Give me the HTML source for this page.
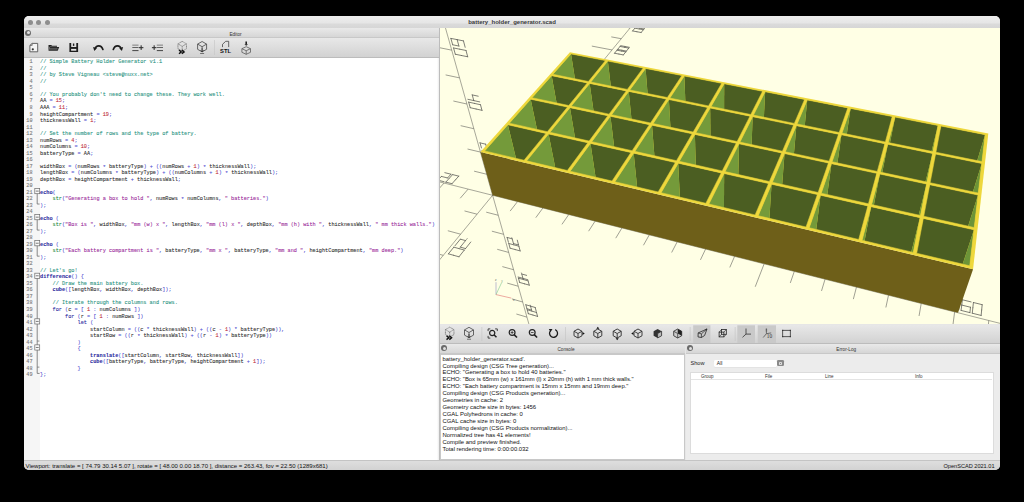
<!DOCTYPE html>
<html><head><meta charset="utf-8"><style>
*{margin:0;padding:0;box-sizing:border-box}
html,body{width:1024px;height:502px;overflow:hidden;background:#000}
body{position:relative;font-family:"Liberation Sans",sans-serif}
.a{position:absolute}
i,b{font-style:normal}
#win{left:24px;top:16px;width:976px;height:454px;border-radius:5px;background:#e6e6e6;overflow:hidden}
#title{left:0;top:0;width:976px;height:12.5px;background:linear-gradient(#eeeeee 0%,#e6e6e6 55%,#dadada 70%,#d6d6d6 100%);border-bottom:0.6px solid #c8c8c8}
.tl{width:5px;height:5px;border-radius:50%;background:#8e8e8e;top:3.8px}
#ttext{left:0;top:0;width:976px;text-align:center;font-weight:bold;font-size:6px;line-height:12px;color:#3a3a3a}
.dockh{height:9.5px;background:linear-gradient(#e9e9e9,#d6d6d6);border-bottom:1px solid #c8c8c8}
.dockt{font-size:4.7px;line-height:9.5px;color:#333;text-align:center;width:100%;top:1.2px;left:0;padding-left:7px}
.closeb{width:6px;height:6px;border-radius:50%;background:#6a6a6a;top:1.8px}
.closeb:after{content:"";position:absolute;left:1.5px;top:1.5px;width:3px;height:3px;border-radius:50%;background:#e0e0e0}
.tb{background:linear-gradient(#e8e8e8,#d2d2d2);border-bottom:1px solid #bcbcbc}
#code{left:16px;top:43.4px;font-family:"Liberation Mono",monospace;font-size:5.22px;line-height:6.515px;white-space:pre;color:#303030;-webkit-text-stroke:0.08px currentColor}
#nums{left:0;top:43.4px;width:8.5px;text-align:right;font-family:"Liberation Mono",monospace;font-size:5.2px;line-height:6.515px;white-space:pre;color:#7a7a7a;-webkit-text-stroke:0.1px currentColor}
#console{left:1.5px;top:0.6px;font-size:5.9px;line-height:6.94px;white-space:pre;color:#111}
#status{left:0;top:443.5px;width:976px;height:10.5px;background:linear-gradient(#dedede,#d2d2d2);border-top:0.6px solid #c4c4c4;font-size:6.03px;line-height:11px;color:#111}
</style></head><body>
<div id="win" class="a">
 <div id="title" class="a">
  <div class="a tl" style="left:3.9px"></div><div class="a tl" style="left:12.3px"></div><div class="a tl" style="left:21.3px"></div>
  <div id="ttext" class="a">battery_holder_generator.scad</div>
 </div>
 <!-- left panel -->
 <div class="a" style="left:0;top:12px;width:416px;height:432px;background:#fff">
  <div class="a dockh" style="left:0;top:0;width:416px"><div class="a closeb" style="left:1px"></div><div class="a dockt" style="top:2.1px">Editor</div></div>
  <div class="a tb" style="left:0;top:9.5px;width:416px;height:20px"></div>
  <div class="a" style="left:0;top:29.5px;width:16px;height:402.5px;background:#f6f6f6"></div>
 </div>
 <div id="nums" class="a">1
2
3
4
5
6
7
8
9
10
11
12
13
14
15
16
17
18
19
20
21
22
23
24
25
26
27
28
29
30
31
32
33
34
35
36
37
38
39
40
41
42
43
44
45
46
47
48
49</div>
 <div id="code" class="a"><i style="color:#2a9482">// Simple Battery Holder Generator v1.1</i>
<i style="color:#2a9482">//</i>
<i style="color:#2a9482">// by Steve Vigneau &lt;steve@nuxx.net&gt;</i>
<i style="color:#2a9482">//</i>

<i style="color:#2a9482">// You probably don&#x27;t need to change these. They work well.</i>
AA <i style="color:#4a4ad0">=</i> <i style="color:#c0303a">15</i><i style="color:#4a4ad0">;</i>
AAA <i style="color:#4a4ad0">=</i> <i style="color:#c0303a">11</i><i style="color:#4a4ad0">;</i>
heightCompartment <i style="color:#4a4ad0">=</i> <i style="color:#c0303a">19</i><i style="color:#4a4ad0">;</i>
thicknessWall <i style="color:#4a4ad0">=</i> <i style="color:#c0303a">1</i><i style="color:#4a4ad0">;</i>

<i style="color:#2a9482">// Set the number of rows and the type of battery.</i>
numRows <i style="color:#4a4ad0">=</i> <i style="color:#c0303a">4</i><i style="color:#4a4ad0">;</i>
numColumns <i style="color:#4a4ad0">=</i> <i style="color:#c0303a">10</i><i style="color:#4a4ad0">;</i>
batteryType <i style="color:#4a4ad0">=</i> AA<i style="color:#4a4ad0">;</i>

widthBox <i style="color:#4a4ad0">=</i> <i style="color:#4a4ad0">(</i>numRows <i style="color:#4a4ad0;position:relative;top:0.9px">*</i> batteryType<i style="color:#4a4ad0">)</i> <i style="color:#4a4ad0">+</i> <i style="color:#4a4ad0">(</i><i style="color:#4a4ad0">(</i>numRows <i style="color:#4a4ad0">+</i> <i style="color:#c0303a">1</i><i style="color:#4a4ad0">)</i> <i style="color:#4a4ad0;position:relative;top:0.9px">*</i> thicknessWall<i style="color:#4a4ad0">)</i><i style="color:#4a4ad0">;</i>
lengthBox <i style="color:#4a4ad0">=</i> <i style="color:#4a4ad0">(</i>numColumns <i style="color:#4a4ad0;position:relative;top:0.9px">*</i> batteryType<i style="color:#4a4ad0">)</i> <i style="color:#4a4ad0">+</i> <i style="color:#4a4ad0">(</i><i style="color:#4a4ad0">(</i>numColumns <i style="color:#4a4ad0">+</i> <i style="color:#c0303a">1</i><i style="color:#4a4ad0">)</i> <i style="color:#4a4ad0;position:relative;top:0.9px">*</i> thicknessWall<i style="color:#4a4ad0">)</i><i style="color:#4a4ad0">;</i>
depthBox <i style="color:#4a4ad0">=</i> heightCompartment <i style="color:#4a4ad0">+</i> thicknessWall<i style="color:#4a4ad0">;</i>

<b style="color:#2c2ca0">echo</b><i style="color:#4a4ad0">(</i>
    <i style="color:#1f8a3a">str</i><i style="color:#4a4ad0">(</i><i style="color:#9a2a9a">&quot;Generating a box to hold &quot;</i><i style="color:#4a4ad0">,</i> numRows <i style="color:#4a4ad0;position:relative;top:0.9px">*</i> numColumns<i style="color:#4a4ad0">,</i> <i style="color:#9a2a9a">&quot; batteries.&quot;</i><i style="color:#4a4ad0">)</i>
<i style="color:#4a4ad0">)</i><i style="color:#4a4ad0">;</i>

<b style="color:#2c2ca0">echo</b> <i style="color:#4a4ad0">(</i>
    <i style="color:#1f8a3a">str</i><i style="color:#4a4ad0">(</i><i style="color:#9a2a9a">&quot;Box is &quot;</i><i style="color:#4a4ad0">,</i> widthBox<i style="color:#4a4ad0">,</i> <i style="color:#9a2a9a">&quot;mm (w) x &quot;</i><i style="color:#4a4ad0">,</i> lengthBox<i style="color:#4a4ad0">,</i> <i style="color:#9a2a9a">&quot;mm (l) x &quot;</i><i style="color:#4a4ad0">,</i> depthBox<i style="color:#4a4ad0">,</i> <i style="color:#9a2a9a">&quot;mm (h) with &quot;</i><i style="color:#4a4ad0">,</i> thicknessWall<i style="color:#4a4ad0">,</i> <i style="color:#9a2a9a">&quot; mm thick walls.&quot;</i><i style="color:#4a4ad0">)</i>
<i style="color:#4a4ad0">)</i><i style="color:#4a4ad0">;</i>

<b style="color:#2c2ca0">echo</b> <i style="color:#4a4ad0">(</i>
    <i style="color:#1f8a3a">str</i><i style="color:#4a4ad0">(</i><i style="color:#9a2a9a">&quot;Each battery compartment is &quot;</i><i style="color:#4a4ad0">,</i> batteryType<i style="color:#4a4ad0">,</i> <i style="color:#9a2a9a">&quot;mm x &quot;</i><i style="color:#4a4ad0">,</i> batteryType<i style="color:#4a4ad0">,</i> <i style="color:#9a2a9a">&quot;mm and &quot;</i><i style="color:#4a4ad0">,</i> heightCompartment<i style="color:#4a4ad0">,</i> <i style="color:#9a2a9a">&quot;mm deep.&quot;</i><i style="color:#4a4ad0">)</i>
<i style="color:#4a4ad0">)</i><i style="color:#4a4ad0">;</i>

<i style="color:#2a9482">// Let&#x27;s go!</i>
<b style="color:#2c2ca0">difference</b><i style="color:#4a4ad0">(</i><i style="color:#4a4ad0">)</i> <i style="color:#4a4ad0">{</i>
    <i style="color:#2a9482">// Draw the main battery box.</i>
    <b style="color:#2c2ca0">cube</b><i style="color:#4a4ad0">(</i><i style="color:#4a4ad0">[</i>lengthBox<i style="color:#4a4ad0">,</i> widthBox<i style="color:#4a4ad0">,</i> depthBox<i style="color:#4a4ad0">]</i><i style="color:#4a4ad0">)</i><i style="color:#4a4ad0">;</i>

    <i style="color:#2a9482">// Iterate through the columns and rows.</i>
    <i style="color:#2c2ca0">for</i> <i style="color:#4a4ad0">(</i>c <i style="color:#4a4ad0">=</i> <i style="color:#4a4ad0">[</i> <i style="color:#c0303a">1</i> <i style="color:#4a4ad0">:</i> numColumns <i style="color:#4a4ad0">]</i><i style="color:#4a4ad0">)</i>
        <i style="color:#2c2ca0">for</i> <i style="color:#4a4ad0">(</i>r <i style="color:#4a4ad0">=</i> <i style="color:#4a4ad0">[</i> <i style="color:#c0303a">1</i> <i style="color:#4a4ad0">:</i> numRows <i style="color:#4a4ad0">]</i><i style="color:#4a4ad0">)</i>
            <i style="color:#2c2ca0">let</i> <i style="color:#4a4ad0">(</i>
                startColumn <i style="color:#4a4ad0">=</i> <i style="color:#4a4ad0">(</i><i style="color:#4a4ad0">(</i>c <i style="color:#4a4ad0;position:relative;top:0.9px">*</i> thicknessWall<i style="color:#4a4ad0">)</i> <i style="color:#4a4ad0">+</i> <i style="color:#4a4ad0">(</i><i style="color:#4a4ad0">(</i>c <i style="color:#4a4ad0">-</i> <i style="color:#c0303a">1</i><i style="color:#4a4ad0">)</i> <i style="color:#4a4ad0;position:relative;top:0.9px">*</i> batteryType<i style="color:#4a4ad0">)</i><i style="color:#4a4ad0">)</i><i style="color:#4a4ad0">,</i>
                startRow <i style="color:#4a4ad0">=</i> <i style="color:#4a4ad0">(</i><i style="color:#4a4ad0">(</i>r <i style="color:#4a4ad0;position:relative;top:0.9px">*</i> thicknessWall<i style="color:#4a4ad0">)</i> <i style="color:#4a4ad0">+</i> <i style="color:#4a4ad0">(</i><i style="color:#4a4ad0">(</i>r <i style="color:#4a4ad0">-</i> <i style="color:#c0303a">1</i><i style="color:#4a4ad0">)</i> <i style="color:#4a4ad0;position:relative;top:0.9px">*</i> batteryType<i style="color:#4a4ad0">)</i><i style="color:#4a4ad0">)</i>
            <i style="color:#4a4ad0">)</i>
            <i style="color:#4a4ad0">{</i>
                <b style="color:#2c2ca0">translate</b><i style="color:#4a4ad0">(</i><i style="color:#4a4ad0">[</i>startColumn<i style="color:#4a4ad0">,</i> startRow<i style="color:#4a4ad0">,</i> thicknessWall<i style="color:#4a4ad0">]</i><i style="color:#4a4ad0">)</i>
                <b style="color:#2c2ca0">cube</b><i style="color:#4a4ad0">(</i><i style="color:#4a4ad0">[</i>batteryType<i style="color:#4a4ad0">,</i> batteryType<i style="color:#4a4ad0">,</i> heightCompartment <i style="color:#4a4ad0">+</i> <i style="color:#c0303a">1</i><i style="color:#4a4ad0">]</i><i style="color:#4a4ad0">)</i><i style="color:#4a4ad0">;</i>
            <i style="color:#4a4ad0">}</i>
<i style="color:#4a4ad0">}</i><i style="color:#4a4ad0">;</i></div>
 <!-- 3d view -->
 <div class="a" style="left:416px;top:12px;width:560px;height:296px;background:#ffffe5;overflow:hidden"><svg width="560" height="296" viewBox="0 0 560 296" style="position:absolute;left:0;top:0"><defs><clipPath id="c1"><polygon points="44.65,122.88 84.06,132.22 105.99,105.39 67.88,96.80" fill="#000"/></clipPath><clipPath id="c2"><polygon points="69.36,95.14 107.39,103.68 127.48,79.10 90.67,71.21" fill="#000"/></clipPath><clipPath id="c3"><polygon points="92.03,69.69 128.77,77.53 147.25,54.93 111.64,47.66" fill="#000"/></clipPath><clipPath id="c4"><polygon points="112.90,46.25 148.43,53.48 165.49,32.62 131.02,25.90" fill="#000"/></clipPath><clipPath id="c5"><polygon points="86.73,132.85 127.37,142.47 147.83,114.82 108.57,105.97" fill="#000"/></clipPath><clipPath id="c6"><polygon points="109.96,104.26 149.13,113.06 167.85,87.75 129.97,79.64" fill="#000"/></clipPath><clipPath id="c7"><polygon points="131.25,78.06 169.05,86.14 186.24,62.89 149.66,55.42" fill="#000"/></clipPath><clipPath id="c8"><polygon points="150.83,53.97 187.34,61.40 203.19,39.98 167.81,33.08" fill="#000"/></clipPath><clipPath id="c9"><polygon points="130.12,143.13 172.06,153.06 190.94,124.53 150.48,115.42" fill="#000"/></clipPath><clipPath id="c10"><polygon points="151.78,113.65 192.14,122.72 209.40,96.65 170.41,88.30" fill="#000"/></clipPath><clipPath id="c11"><polygon points="171.60,86.68 210.50,94.99 226.33,71.07 188.72,63.39" fill="#000"/></clipPath><clipPath id="c12"><polygon points="189.81,61.91 227.34,69.55 241.91,47.53 205.58,40.44" fill="#000"/></clipPath><clipPath id="c13"><polygon points="174.90,153.73 218.19,163.98 235.39,134.55 193.68,125.15" fill="#000"/></clipPath><clipPath id="c14"><polygon points="194.87,123.33 236.48,132.68 252.17,105.82 212.03,97.22" fill="#000"/></clipPath><clipPath id="c15"><polygon points="213.13,95.55 253.17,104.10 267.55,79.49 228.87,71.59" fill="#000"/></clipPath><clipPath id="c16"><polygon points="229.88,70.06 268.47,77.92 281.69,55.29 244.37,48.01" fill="#000"/></clipPath><clipPath id="c17"><polygon points="221.12,164.68 265.84,175.27 281.23,144.88 238.21,135.19" fill="#000"/></clipPath><clipPath id="c18"><polygon points="239.30,133.31 282.21,142.95 296.23,115.26 254.89,106.40" fill="#000"/></clipPath><clipPath id="c19"><polygon points="255.88,104.68 297.13,113.49 309.96,88.15 270.17,80.03" fill="#000"/></clipPath><clipPath id="c20"><polygon points="271.08,78.45 310.78,86.53 322.56,63.26 284.21,55.78" fill="#000"/></clipPath><clipPath id="c21"><polygon points="268.88,175.99 315.09,186.93 328.55,155.54 284.15,145.54" fill="#000"/></clipPath><clipPath id="c22"><polygon points="285.12,143.60 329.40,153.55 341.64,124.98 299.03,115.86" fill="#000"/></clipPath><clipPath id="c23"><polygon points="299.92,114.09 342.42,123.17 353.61,97.06 312.65,88.70" fill="#000"/></clipPath><clipPath id="c24"><polygon points="313.46,87.08 354.32,95.40 364.58,71.45 325.16,63.76" fill="#000"/></clipPath><clipPath id="c25"><polygon points="318.23,187.68 366.02,199.00 377.40,166.55 331.55,156.22" fill="#000"/></clipPath><clipPath id="c26"><polygon points="332.40,154.22 378.12,164.49 388.46,135.01 344.53,125.60" fill="#000"/></clipPath><clipPath id="c27"><polygon points="345.30,123.78 389.12,133.14 398.55,106.24 356.38,97.63" fill="#000"/></clipPath><clipPath id="c28"><polygon points="357.09,95.96 399.15,104.53 407.80,79.88 367.25,71.97" fill="#000"/></clipPath><clipPath id="c29"><polygon points="369.26,199.76 418.70,211.47 427.86,177.92 380.50,167.25" fill="#000"/></clipPath><clipPath id="c30"><polygon points="381.22,165.19 428.44,175.79 436.75,145.36 391.43,135.65" fill="#000"/></clipPath><clipPath id="c31"><polygon points="392.08,133.77 437.28,143.43 444.85,115.69 401.40,106.82" fill="#000"/></clipPath><clipPath id="c32"><polygon points="402.00,105.11 445.33,113.93 452.25,88.55 410.54,80.42" fill="#000"/></clipPath><clipPath id="c33"><polygon points="422.06,212.27 473.25,224.39 480.02,189.68 431.07,178.65" fill="#000"/></clipPath><clipPath id="c34"><polygon points="431.64,176.51 480.45,187.48 486.58,156.04 439.82,146.02" fill="#000"/></clipPath><clipPath id="c35"><polygon points="440.34,144.08 486.97,154.04 492.56,125.44 447.79,116.29" fill="#000"/></clipPath><clipPath id="c36"><polygon points="448.26,114.52 492.91,123.61 498.01,97.48 455.08,89.10" fill="#000"/></clipPath><clipPath id="c37"><polygon points="476.72,225.21 529.74,237.77 533.96,201.83 483.34,190.42" fill="#000"/></clipPath><clipPath id="c38"><polygon points="483.76,188.22 534.23,199.56 538.04,167.06 489.75,156.72" fill="#000"/></clipPath><clipPath id="c39"><polygon points="490.13,154.71 538.28,165.00 541.75,135.48 495.59,126.05" fill="#000"/></clipPath><clipPath id="c40"><polygon points="495.93,124.23 541.97,133.60 545.13,106.67 500.92,98.04" fill="#000"/></clipPath></defs><polyline points="-214.74,99.80 1069.44,423.94" fill="none" stroke="#60605a" stroke-width="0.55"/><polyline points="-153.88,418.61 304.58,-139.39" fill="none" stroke="#60605a" stroke-width="0.55"/><polyline points="115.35,389.95 -87.35,-329.51" fill="none" stroke="#60605a" stroke-width="0.55"/><polyline points="94.92,317.45 84.75,314.37" fill="none" stroke="#60605a" stroke-width="0.6"/><polyline points="91.02,303.58 80.65,300.49" fill="none" stroke="#60605a" stroke-width="0.6"/><polyline points="86.94,289.12 76.37,286.02" fill="none" stroke="#60605a" stroke-width="0.6"/><polyline points="82.69,274.01 71.89,270.90" fill="none" stroke="#60605a" stroke-width="0.6"/><polyline points="78.24,258.23 67.22,255.11" fill="none" stroke="#60605a" stroke-width="0.6"/><polyline points="-15.16,249.76 -28.57,245.88" fill="none" stroke="#60605a" stroke-width="0.6"/><polyline points="73.59,241.72 62.34,238.60" fill="none" stroke="#60605a" stroke-width="0.6"/><polyline points="-19.52,149.07 -27.93,157.92" fill="none" stroke="#60605a" stroke-width="0.6"/><polyline points="3.26,227.35 -9.86,223.68" fill="none" stroke="#60605a" stroke-width="0.6"/><polyline points="68.71,224.43 57.22,221.30" fill="none" stroke="#60605a" stroke-width="0.6"/><polyline points="4.10,155.03 -4.08,164.04" fill="none" stroke="#60605a" stroke-width="0.6"/><polyline points="20.64,206.19 7.81,202.73" fill="none" stroke="#60605a" stroke-width="0.6"/><polyline points="63.61,206.30 51.86,203.18" fill="none" stroke="#60605a" stroke-width="0.6"/><polyline points="28.14,161.10 20.21,170.27" fill="none" stroke="#60605a" stroke-width="0.6"/><polyline points="37.07,186.20 24.51,182.93" fill="none" stroke="#60605a" stroke-width="0.6"/><polyline points="58.25,187.27 46.23,184.16" fill="none" stroke="#60605a" stroke-width="0.6"/><polyline points="77.54,173.57 70.14,183.08" fill="none" stroke="#60605a" stroke-width="0.6"/><polyline points="67.35,149.34 55.31,146.40" fill="none" stroke="#60605a" stroke-width="0.6"/><polyline points="46.69,146.24 34.10,143.16" fill="none" stroke="#60605a" stroke-width="0.6"/><polyline points="102.92,179.98 95.80,189.66" fill="none" stroke="#60605a" stroke-width="0.6"/><polyline points="81.34,132.31 69.55,129.52" fill="none" stroke="#60605a" stroke-width="0.6"/><polyline points="40.44,124.08 27.55,121.02" fill="none" stroke="#60605a" stroke-width="0.6"/><polyline points="128.77,186.50 121.95,196.37" fill="none" stroke="#60605a" stroke-width="0.6"/><polyline points="94.64,116.13 83.08,113.47" fill="none" stroke="#60605a" stroke-width="0.6"/><polyline points="33.86,100.71 20.65,97.67" fill="none" stroke="#60605a" stroke-width="0.6"/><polyline points="155.11,193.15 148.59,203.20" fill="none" stroke="#60605a" stroke-width="0.6"/><polyline points="107.30,100.73 95.96,98.19" fill="none" stroke="#60605a" stroke-width="0.6"/><polyline points="26.90,76.00 13.35,73.01" fill="none" stroke="#60605a" stroke-width="0.6"/><polyline points="181.95,199.93 175.75,210.17" fill="none" stroke="#60605a" stroke-width="0.6"/><polyline points="119.36,86.05 108.24,83.63" fill="none" stroke="#60605a" stroke-width="0.6"/><polyline points="19.53,49.87 5.63,46.92" fill="none" stroke="#60605a" stroke-width="0.6"/><polyline points="209.30,206.83 203.43,217.27" fill="none" stroke="#60605a" stroke-width="0.6"/><polyline points="130.86,72.05 119.95,69.74" fill="none" stroke="#60605a" stroke-width="0.6"/><polyline points="11.73,22.16 -2.55,19.27" fill="none" stroke="#60605a" stroke-width="0.6"/><polyline points="237.18,213.87 231.66,224.51" fill="none" stroke="#60605a" stroke-width="0.6"/><polyline points="141.85,58.67 131.14,56.47" fill="none" stroke="#60605a" stroke-width="0.6"/><polyline points="3.44,-7.26 -11.23,-10.07" fill="none" stroke="#60605a" stroke-width="0.6"/><polyline points="265.60,221.04 260.44,231.90" fill="none" stroke="#60605a" stroke-width="0.6"/><polyline points="152.35,45.89 141.84,43.78" fill="none" stroke="#60605a" stroke-width="0.6"/><polyline points="294.59,228.36 289.80,239.43" fill="none" stroke="#60605a" stroke-width="0.6"/><polyline points="162.40,33.66 152.08,31.64" fill="none" stroke="#60605a" stroke-width="0.6"/><polyline points="324.15,235.82 315.22,258.75" fill="none" stroke="#60605a" stroke-width="0.6"/><polyline points="172.02,21.94 151.83,18.09" fill="none" stroke="#60605a" stroke-width="0.6"/><polyline points="354.30,243.43 350.31,254.95" fill="none" stroke="#60605a" stroke-width="0.6"/><polyline points="181.25,10.71 171.29,8.86" fill="none" stroke="#60605a" stroke-width="0.6"/><polyline points="385.06,251.19 381.51,262.96" fill="none" stroke="#60605a" stroke-width="0.6"/><polyline points="190.11,-0.06 180.32,-1.85" fill="none" stroke="#60605a" stroke-width="0.6"/><polyline points="416.46,259.12 413.35,271.13" fill="none" stroke="#60605a" stroke-width="0.6"/><polyline points="198.61,-10.41 188.99,-12.13" fill="none" stroke="#60605a" stroke-width="0.6"/><polyline points="448.51,267.21 445.86,279.47" fill="none" stroke="#60605a" stroke-width="0.6"/><polyline points="206.78,-20.36 197.32,-22.01" fill="none" stroke="#60605a" stroke-width="0.6"/><polyline points="481.22,275.46 479.06,287.98" fill="none" stroke="#60605a" stroke-width="0.6"/><polyline points="514.63,283.90 512.98,296.69" fill="none" stroke="#60605a" stroke-width="0.6"/><polyline points="548.75,292.51 547.63,305.58" fill="none" stroke="#60605a" stroke-width="0.6"/><polyline points="583.61,301.31 583.04,314.66" fill="none" stroke="#60605a" stroke-width="0.6"/><polyline points="103.00,308.85 103.97,312.48" fill="none" stroke="#60605a" stroke-width="0.8" stroke-linecap="round"/><polyline points="103.97,312.48 99.50,311.14" fill="none" stroke="#60605a" stroke-width="0.8" stroke-linecap="round"/><polyline points="99.50,311.14 95.04,309.81" fill="none" stroke="#60605a" stroke-width="0.8" stroke-linecap="round"/><polyline points="94.03,306.17 95.04,309.81" fill="none" stroke="#60605a" stroke-width="0.8" stroke-linecap="round"/><polyline points="94.03,306.17 98.51,307.50" fill="none" stroke="#60605a" stroke-width="0.8" stroke-linecap="round"/><polyline points="98.51,307.50 103.00,308.85" fill="none" stroke="#60605a" stroke-width="0.8" stroke-linecap="round"/><polyline points="98.51,307.50 99.50,311.14" fill="none" stroke="#60605a" stroke-width="0.8" stroke-linecap="round"/><polyline points="104.23,313.46 105.18,317.04" fill="none" stroke="#60605a" stroke-width="0.8" stroke-linecap="round"/><polyline points="105.18,317.04 100.74,315.71" fill="none" stroke="#60605a" stroke-width="0.8" stroke-linecap="round"/><polyline points="100.74,315.71 96.31,314.37" fill="none" stroke="#60605a" stroke-width="0.8" stroke-linecap="round"/><polyline points="95.31,310.78 96.31,314.37" fill="none" stroke="#60605a" stroke-width="0.8" stroke-linecap="round"/><polyline points="95.31,310.78 99.76,312.12" fill="none" stroke="#60605a" stroke-width="0.8" stroke-linecap="round"/><polyline points="99.76,312.12 104.23,313.46" fill="none" stroke="#60605a" stroke-width="0.8" stroke-linecap="round"/><polyline points="98.06,306.20 98.33,307.19" fill="none" stroke="#60605a" stroke-width="0.55"/><polyline points="95.19,279.47 96.24,283.43" fill="none" stroke="#60605a" stroke-width="0.8" stroke-linecap="round"/><polyline points="90.51,278.11 95.19,279.47" fill="none" stroke="#60605a" stroke-width="0.8" stroke-linecap="round"/><polyline points="85.84,276.77 90.51,278.11" fill="none" stroke="#60605a" stroke-width="0.8" stroke-linecap="round"/><polyline points="85.84,276.77 86.95,280.73" fill="none" stroke="#60605a" stroke-width="0.8" stroke-linecap="round"/><polyline points="91.59,282.08 86.95,280.73" fill="none" stroke="#60605a" stroke-width="0.8" stroke-linecap="round"/><polyline points="90.51,278.11 91.59,282.08" fill="none" stroke="#60605a" stroke-width="0.8" stroke-linecap="round"/><polyline points="96.52,284.49 97.56,288.40" fill="none" stroke="#60605a" stroke-width="0.8" stroke-linecap="round"/><polyline points="97.56,288.40 92.94,287.05" fill="none" stroke="#60605a" stroke-width="0.8" stroke-linecap="round"/><polyline points="92.94,287.05 88.33,285.70" fill="none" stroke="#60605a" stroke-width="0.8" stroke-linecap="round"/><polyline points="87.24,281.79 88.33,285.70" fill="none" stroke="#60605a" stroke-width="0.8" stroke-linecap="round"/><polyline points="87.24,281.79 91.88,283.14" fill="none" stroke="#60605a" stroke-width="0.8" stroke-linecap="round"/><polyline points="91.88,283.14 96.52,284.49" fill="none" stroke="#60605a" stroke-width="0.8" stroke-linecap="round"/><polyline points="90.02,276.70 90.32,277.77" fill="none" stroke="#60605a" stroke-width="0.55"/><polyline points="81.77,246.01 86.65,247.37" fill="none" stroke="#60605a" stroke-width="0.8" stroke-linecap="round"/><polyline points="81.77,246.01 82.95,250.35" fill="none" stroke="#60605a" stroke-width="0.8" stroke-linecap="round"/><polyline points="87.80,251.71 82.95,250.35" fill="none" stroke="#60605a" stroke-width="0.8" stroke-linecap="round"/><polyline points="82.95,250.35 78.12,249.00" fill="none" stroke="#60605a" stroke-width="0.8" stroke-linecap="round"/><polyline points="88.11,252.87 89.25,257.14" fill="none" stroke="#60605a" stroke-width="0.8" stroke-linecap="round"/><polyline points="89.25,257.14 84.43,255.79" fill="none" stroke="#60605a" stroke-width="0.8" stroke-linecap="round"/><polyline points="84.43,255.79 79.63,254.43" fill="none" stroke="#60605a" stroke-width="0.8" stroke-linecap="round"/><polyline points="78.44,250.16 79.63,254.43" fill="none" stroke="#60605a" stroke-width="0.8" stroke-linecap="round"/><polyline points="78.44,250.16 83.27,251.51" fill="none" stroke="#60605a" stroke-width="0.8" stroke-linecap="round"/><polyline points="83.27,251.51 88.11,252.87" fill="none" stroke="#60605a" stroke-width="0.8" stroke-linecap="round"/><polyline points="81.25,244.47 81.57,245.65" fill="none" stroke="#60605a" stroke-width="0.55"/><polyline points="-10.28,256.95 -4.81,258.54" fill="none" stroke="#60605a" stroke-width="0.8" stroke-linecap="round"/><polyline points="-10.28,256.95 -16.22,264.31" fill="none" stroke="#60605a" stroke-width="0.8" stroke-linecap="round"/><polyline points="-10.72,265.94 -16.22,264.31" fill="none" stroke="#60605a" stroke-width="0.8" stroke-linecap="round"/><polyline points="-16.22,264.31 -21.70,262.69" fill="none" stroke="#60605a" stroke-width="0.8" stroke-linecap="round"/><polyline points="-12.07,267.62 -18.11,275.19" fill="none" stroke="#60605a" stroke-width="0.8" stroke-linecap="round"/><polyline points="-18.11,275.19 -23.67,273.52" fill="none" stroke="#60605a" stroke-width="0.8" stroke-linecap="round"/><polyline points="-23.67,273.52 -29.20,271.87" fill="none" stroke="#60605a" stroke-width="0.8" stroke-linecap="round"/><polyline points="-23.07,264.36 -29.20,271.87" fill="none" stroke="#60605a" stroke-width="0.8" stroke-linecap="round"/><polyline points="-23.07,264.36 -17.58,265.99" fill="none" stroke="#60605a" stroke-width="0.8" stroke-linecap="round"/><polyline points="-17.58,265.99 -12.07,267.62" fill="none" stroke="#60605a" stroke-width="0.8" stroke-linecap="round"/><polyline points="-8.01,254.14 -9.71,256.24" fill="none" stroke="#60605a" stroke-width="0.55"/><polyline points="77.29,212.17 78.56,216.94" fill="none" stroke="#60605a" stroke-width="0.8" stroke-linecap="round"/><polyline points="78.56,216.94 73.49,215.58" fill="none" stroke="#60605a" stroke-width="0.8" stroke-linecap="round"/><polyline points="72.19,210.81 73.49,215.58" fill="none" stroke="#60605a" stroke-width="0.8" stroke-linecap="round"/><polyline points="67.11,209.46 72.19,210.81" fill="none" stroke="#60605a" stroke-width="0.8" stroke-linecap="round"/><polyline points="67.11,209.46 68.44,214.22" fill="none" stroke="#60605a" stroke-width="0.8" stroke-linecap="round"/><polyline points="78.89,218.21 80.14,222.90" fill="none" stroke="#60605a" stroke-width="0.8" stroke-linecap="round"/><polyline points="80.14,222.90 75.11,221.54" fill="none" stroke="#60605a" stroke-width="0.8" stroke-linecap="round"/><polyline points="75.11,221.54 70.10,220.19" fill="none" stroke="#60605a" stroke-width="0.8" stroke-linecap="round"/><polyline points="68.79,215.50 70.10,220.19" fill="none" stroke="#60605a" stroke-width="0.8" stroke-linecap="round"/><polyline points="68.79,215.50 73.83,216.85" fill="none" stroke="#60605a" stroke-width="0.8" stroke-linecap="round"/><polyline points="73.83,216.85 78.89,218.21" fill="none" stroke="#60605a" stroke-width="0.8" stroke-linecap="round"/><polyline points="71.62,209.11 71.97,210.41" fill="none" stroke="#60605a" stroke-width="0.55"/><polyline points="30.78,214.01 25.53,220.57" fill="none" stroke="#60605a" stroke-width="0.8" stroke-linecap="round"/><polyline points="25.53,220.57 20.27,219.13" fill="none" stroke="#60605a" stroke-width="0.8" stroke-linecap="round"/><polyline points="25.56,212.59 20.27,219.13" fill="none" stroke="#60605a" stroke-width="0.8" stroke-linecap="round"/><polyline points="20.36,211.17 25.56,212.59" fill="none" stroke="#60605a" stroke-width="0.8" stroke-linecap="round"/><polyline points="20.36,211.17 15.04,217.69" fill="none" stroke="#60605a" stroke-width="0.8" stroke-linecap="round"/><polyline points="24.33,222.07 18.97,228.79" fill="none" stroke="#60605a" stroke-width="0.8" stroke-linecap="round"/><polyline points="18.97,228.79 13.67,227.31" fill="none" stroke="#60605a" stroke-width="0.8" stroke-linecap="round"/><polyline points="13.67,227.31 8.38,225.84" fill="none" stroke="#60605a" stroke-width="0.8" stroke-linecap="round"/><polyline points="13.82,219.18 8.38,225.84" fill="none" stroke="#60605a" stroke-width="0.8" stroke-linecap="round"/><polyline points="13.82,219.18 19.07,220.62" fill="none" stroke="#60605a" stroke-width="0.8" stroke-linecap="round"/><polyline points="19.07,220.62 24.33,222.07" fill="none" stroke="#60605a" stroke-width="0.8" stroke-linecap="round"/><polyline points="27.58,210.08 26.06,211.96" fill="none" stroke="#60605a" stroke-width="0.55"/><polyline points="4.84,144.68 10.96,146.20" fill="none" stroke="#60605a" stroke-width="0.8" stroke-linecap="round"/><polyline points="10.96,146.20 7.55,149.95" fill="none" stroke="#60605a" stroke-width="0.8" stroke-linecap="round"/><polyline points="1.41,148.41 7.55,149.95" fill="none" stroke="#60605a" stroke-width="0.8" stroke-linecap="round"/><polyline points="-2.06,152.18 1.41,148.41" fill="none" stroke="#60605a" stroke-width="0.8" stroke-linecap="round"/><polyline points="-2.06,152.18 4.11,153.73" fill="none" stroke="#60605a" stroke-width="0.8" stroke-linecap="round"/><polyline points="12.61,146.61 18.76,148.14" fill="none" stroke="#60605a" stroke-width="0.8" stroke-linecap="round"/><polyline points="18.76,148.14 15.39,151.91" fill="none" stroke="#60605a" stroke-width="0.8" stroke-linecap="round"/><polyline points="15.39,151.91 11.98,155.71" fill="none" stroke="#60605a" stroke-width="0.8" stroke-linecap="round"/><polyline points="5.78,154.15 11.98,155.71" fill="none" stroke="#60605a" stroke-width="0.8" stroke-linecap="round"/><polyline points="5.78,154.15 9.21,150.36" fill="none" stroke="#60605a" stroke-width="0.8" stroke-linecap="round"/><polyline points="9.21,150.36 12.61,146.61" fill="none" stroke="#60605a" stroke-width="0.8" stroke-linecap="round"/><polyline points="-2.74,147.26 0.08,147.97" fill="none" stroke="#60605a" stroke-width="0.55"/><polyline points="51.37,117.51 52.73,122.61" fill="none" stroke="#60605a" stroke-width="0.8" stroke-linecap="round"/><polyline points="52.73,122.61 47.09,121.27" fill="none" stroke="#60605a" stroke-width="0.8" stroke-linecap="round"/><polyline points="45.69,116.18 47.09,121.27" fill="none" stroke="#60605a" stroke-width="0.8" stroke-linecap="round"/><polyline points="40.05,114.86 45.69,116.18" fill="none" stroke="#60605a" stroke-width="0.8" stroke-linecap="round"/><polyline points="40.05,114.86 41.47,119.95" fill="none" stroke="#60605a" stroke-width="0.8" stroke-linecap="round"/><polyline points="53.40,125.13 54.74,130.14" fill="none" stroke="#60605a" stroke-width="0.8" stroke-linecap="round"/><polyline points="54.74,130.14 49.14,128.80" fill="none" stroke="#60605a" stroke-width="0.8" stroke-linecap="round"/><polyline points="49.14,128.80 43.57,127.47" fill="none" stroke="#60605a" stroke-width="0.8" stroke-linecap="round"/><polyline points="42.17,122.47 43.57,127.47" fill="none" stroke="#60605a" stroke-width="0.8" stroke-linecap="round"/><polyline points="42.17,122.47 47.77,123.80" fill="none" stroke="#60605a" stroke-width="0.8" stroke-linecap="round"/><polyline points="47.77,123.80 53.40,125.13" fill="none" stroke="#60605a" stroke-width="0.8" stroke-linecap="round"/><polyline points="103.99,126.96 100.60,131.24" fill="none" stroke="#60605a" stroke-width="0.8" stroke-linecap="round"/><polyline points="100.60,131.24 95.48,130.04" fill="none" stroke="#60605a" stroke-width="0.8" stroke-linecap="round"/><polyline points="98.90,125.78 95.48,130.04" fill="none" stroke="#60605a" stroke-width="0.8" stroke-linecap="round"/><polyline points="93.84,124.60 98.90,125.78" fill="none" stroke="#60605a" stroke-width="0.8" stroke-linecap="round"/><polyline points="93.84,124.60 90.39,128.84" fill="none" stroke="#60605a" stroke-width="0.8" stroke-linecap="round"/><polyline points="99.67,132.40 96.23,136.74" fill="none" stroke="#60605a" stroke-width="0.8" stroke-linecap="round"/><polyline points="96.23,136.74 91.08,135.52" fill="none" stroke="#60605a" stroke-width="0.8" stroke-linecap="round"/><polyline points="91.08,135.52 85.95,134.30" fill="none" stroke="#60605a" stroke-width="0.8" stroke-linecap="round"/><polyline points="89.46,129.99 85.95,134.30" fill="none" stroke="#60605a" stroke-width="0.8" stroke-linecap="round"/><polyline points="89.46,129.99 94.56,131.19" fill="none" stroke="#60605a" stroke-width="0.8" stroke-linecap="round"/><polyline points="94.56,131.19 99.67,132.40" fill="none" stroke="#60605a" stroke-width="0.8" stroke-linecap="round"/><polyline points="106.74,168.69 113.31,170.32" fill="none" stroke="#60605a" stroke-width="0.8" stroke-linecap="round"/><polyline points="113.31,170.32 110.38,174.33" fill="none" stroke="#60605a" stroke-width="0.8" stroke-linecap="round"/><polyline points="103.77,172.68 110.38,174.33" fill="none" stroke="#60605a" stroke-width="0.8" stroke-linecap="round"/><polyline points="100.77,176.73 103.77,172.68" fill="none" stroke="#60605a" stroke-width="0.8" stroke-linecap="round"/><polyline points="100.77,176.73 107.41,178.40" fill="none" stroke="#60605a" stroke-width="0.8" stroke-linecap="round"/><polyline points="115.09,170.76 121.71,172.40" fill="none" stroke="#60605a" stroke-width="0.8" stroke-linecap="round"/><polyline points="121.71,172.40 118.81,176.44" fill="none" stroke="#60605a" stroke-width="0.8" stroke-linecap="round"/><polyline points="118.81,176.44 115.88,180.53" fill="none" stroke="#60605a" stroke-width="0.8" stroke-linecap="round"/><polyline points="109.20,178.85 115.88,180.53" fill="none" stroke="#60605a" stroke-width="0.8" stroke-linecap="round"/><polyline points="109.20,178.85 112.16,174.78" fill="none" stroke="#60605a" stroke-width="0.8" stroke-linecap="round"/><polyline points="112.16,174.78 115.09,170.76" fill="none" stroke="#60605a" stroke-width="0.8" stroke-linecap="round"/><polyline points="32.24,66.91 38.21,68.21" fill="none" stroke="#60605a" stroke-width="0.8" stroke-linecap="round"/><polyline points="32.24,66.91 33.80,72.60" fill="none" stroke="#60605a" stroke-width="0.8" stroke-linecap="round"/><polyline points="39.73,73.90 33.80,72.60" fill="none" stroke="#60605a" stroke-width="0.8" stroke-linecap="round"/><polyline points="33.80,72.60 27.89,71.31" fill="none" stroke="#60605a" stroke-width="0.8" stroke-linecap="round"/><polyline points="40.49,76.73 41.98,82.32" fill="none" stroke="#60605a" stroke-width="0.8" stroke-linecap="round"/><polyline points="41.98,82.32 36.09,81.01" fill="none" stroke="#60605a" stroke-width="0.8" stroke-linecap="round"/><polyline points="36.09,81.01 30.23,79.71" fill="none" stroke="#60605a" stroke-width="0.8" stroke-linecap="round"/><polyline points="28.67,74.13 30.23,79.71" fill="none" stroke="#60605a" stroke-width="0.8" stroke-linecap="round"/><polyline points="28.67,74.13 34.57,75.42" fill="none" stroke="#60605a" stroke-width="0.8" stroke-linecap="round"/><polyline points="34.57,75.42 40.49,76.73" fill="none" stroke="#60605a" stroke-width="0.8" stroke-linecap="round"/><polyline points="123.77,94.80 128.65,95.88" fill="none" stroke="#60605a" stroke-width="0.8" stroke-linecap="round"/><polyline points="123.77,94.80 120.67,98.66" fill="none" stroke="#60605a" stroke-width="0.8" stroke-linecap="round"/><polyline points="125.58,99.75 120.67,98.66" fill="none" stroke="#60605a" stroke-width="0.8" stroke-linecap="round"/><polyline points="120.67,98.66 115.78,97.58" fill="none" stroke="#60605a" stroke-width="0.8" stroke-linecap="round"/><polyline points="124.75,100.80 121.63,104.73" fill="none" stroke="#60605a" stroke-width="0.8" stroke-linecap="round"/><polyline points="121.63,104.73 116.68,103.63" fill="none" stroke="#60605a" stroke-width="0.8" stroke-linecap="round"/><polyline points="116.68,103.63 111.76,102.53" fill="none" stroke="#60605a" stroke-width="0.8" stroke-linecap="round"/><polyline points="114.93,98.62 111.76,102.53" fill="none" stroke="#60605a" stroke-width="0.8" stroke-linecap="round"/><polyline points="114.93,98.62 119.83,99.71" fill="none" stroke="#60605a" stroke-width="0.8" stroke-linecap="round"/><polyline points="119.83,99.71 124.75,100.80" fill="none" stroke="#60605a" stroke-width="0.8" stroke-linecap="round"/><polyline points="155.43,185.58 158.14,181.44" fill="none" stroke="#60605a" stroke-width="0.8" stroke-linecap="round"/><polyline points="155.43,185.58 162.28,187.30" fill="none" stroke="#60605a" stroke-width="0.8" stroke-linecap="round"/><polyline points="164.97,183.13 162.28,187.30" fill="none" stroke="#60605a" stroke-width="0.8" stroke-linecap="round"/><polyline points="162.28,187.30 159.57,191.51" fill="none" stroke="#60605a" stroke-width="0.8" stroke-linecap="round"/><polyline points="166.81,183.58 173.67,185.29" fill="none" stroke="#60605a" stroke-width="0.8" stroke-linecap="round"/><polyline points="173.67,185.29 171.03,189.48" fill="none" stroke="#60605a" stroke-width="0.8" stroke-linecap="round"/><polyline points="171.03,189.48 168.36,193.72" fill="none" stroke="#60605a" stroke-width="0.8" stroke-linecap="round"/><polyline points="161.43,191.98 168.36,193.72" fill="none" stroke="#60605a" stroke-width="0.8" stroke-linecap="round"/><polyline points="161.43,191.98 164.14,187.76" fill="none" stroke="#60605a" stroke-width="0.8" stroke-linecap="round"/><polyline points="164.14,187.76 166.81,183.58" fill="none" stroke="#60605a" stroke-width="0.8" stroke-linecap="round"/><polyline points="23.45,12.88 25.16,19.30" fill="none" stroke="#60605a" stroke-width="0.8" stroke-linecap="round"/><polyline points="17.15,11.64 23.45,12.88" fill="none" stroke="#60605a" stroke-width="0.8" stroke-linecap="round"/><polyline points="10.88,10.39 17.15,11.64" fill="none" stroke="#60605a" stroke-width="0.8" stroke-linecap="round"/><polyline points="10.88,10.39 12.67,16.79" fill="none" stroke="#60605a" stroke-width="0.8" stroke-linecap="round"/><polyline points="18.90,18.04 12.67,16.79" fill="none" stroke="#60605a" stroke-width="0.8" stroke-linecap="round"/><polyline points="17.15,11.64 18.90,18.04" fill="none" stroke="#60605a" stroke-width="0.8" stroke-linecap="round"/><polyline points="26.01,22.47 27.69,28.76" fill="none" stroke="#60605a" stroke-width="0.8" stroke-linecap="round"/><polyline points="27.69,28.76 21.48,27.50" fill="none" stroke="#60605a" stroke-width="0.8" stroke-linecap="round"/><polyline points="21.48,27.50 15.31,26.24" fill="none" stroke="#60605a" stroke-width="0.8" stroke-linecap="round"/><polyline points="13.55,19.96 15.31,26.24" fill="none" stroke="#60605a" stroke-width="0.8" stroke-linecap="round"/><polyline points="13.55,19.96 19.77,21.21" fill="none" stroke="#60605a" stroke-width="0.8" stroke-linecap="round"/><polyline points="19.77,21.21 26.01,22.47" fill="none" stroke="#60605a" stroke-width="0.8" stroke-linecap="round"/><polyline points="151.06,67.63 148.27,71.16" fill="none" stroke="#60605a" stroke-width="0.8" stroke-linecap="round"/><polyline points="146.37,66.65 151.06,67.63" fill="none" stroke="#60605a" stroke-width="0.8" stroke-linecap="round"/><polyline points="141.68,65.68 146.37,66.65" fill="none" stroke="#60605a" stroke-width="0.8" stroke-linecap="round"/><polyline points="141.68,65.68 138.84,69.18" fill="none" stroke="#60605a" stroke-width="0.8" stroke-linecap="round"/><polyline points="143.55,70.17 138.84,69.18" fill="none" stroke="#60605a" stroke-width="0.8" stroke-linecap="round"/><polyline points="146.37,66.65 143.55,70.17" fill="none" stroke="#60605a" stroke-width="0.8" stroke-linecap="round"/><polyline points="147.51,72.11 144.67,75.69" fill="none" stroke="#60605a" stroke-width="0.8" stroke-linecap="round"/><polyline points="144.67,75.69 139.92,74.69" fill="none" stroke="#60605a" stroke-width="0.8" stroke-linecap="round"/><polyline points="139.92,74.69 135.18,73.68" fill="none" stroke="#60605a" stroke-width="0.8" stroke-linecap="round"/><polyline points="138.07,70.13 135.18,73.68" fill="none" stroke="#60605a" stroke-width="0.8" stroke-linecap="round"/><polyline points="138.07,70.13 142.78,71.12" fill="none" stroke="#60605a" stroke-width="0.8" stroke-linecap="round"/><polyline points="142.78,71.12 147.51,72.11" fill="none" stroke="#60605a" stroke-width="0.8" stroke-linecap="round"/><polyline points="211.49,194.66 218.57,196.42" fill="none" stroke="#60605a" stroke-width="0.8" stroke-linecap="round"/><polyline points="209.04,198.97 211.49,194.66" fill="none" stroke="#60605a" stroke-width="0.8" stroke-linecap="round"/><polyline points="206.56,203.33 209.04,198.97" fill="none" stroke="#60605a" stroke-width="0.8" stroke-linecap="round"/><polyline points="206.56,203.33 213.72,205.13" fill="none" stroke="#60605a" stroke-width="0.8" stroke-linecap="round"/><polyline points="216.16,200.75 213.72,205.13" fill="none" stroke="#60605a" stroke-width="0.8" stroke-linecap="round"/><polyline points="209.04,198.97 216.16,200.75" fill="none" stroke="#60605a" stroke-width="0.8" stroke-linecap="round"/><polyline points="220.48,196.90 227.61,198.66" fill="none" stroke="#60605a" stroke-width="0.8" stroke-linecap="round"/><polyline points="227.61,198.66 225.24,203.02" fill="none" stroke="#60605a" stroke-width="0.8" stroke-linecap="round"/><polyline points="225.24,203.02 222.85,207.43" fill="none" stroke="#60605a" stroke-width="0.8" stroke-linecap="round"/><polyline points="215.65,205.61 222.85,207.43" fill="none" stroke="#60605a" stroke-width="0.8" stroke-linecap="round"/><polyline points="215.65,205.61 218.08,201.23" fill="none" stroke="#60605a" stroke-width="0.8" stroke-linecap="round"/><polyline points="218.08,201.23 220.48,196.90" fill="none" stroke="#60605a" stroke-width="0.8" stroke-linecap="round"/><polyline points="171.52,41.86 168.96,45.08" fill="none" stroke="#60605a" stroke-width="0.8" stroke-linecap="round"/><polyline points="168.96,45.08 164.41,44.18" fill="none" stroke="#60605a" stroke-width="0.8" stroke-linecap="round"/><polyline points="164.41,44.18 159.88,43.27" fill="none" stroke="#60605a" stroke-width="0.8" stroke-linecap="round"/><polyline points="162.48,40.07 159.88,43.27" fill="none" stroke="#60605a" stroke-width="0.8" stroke-linecap="round"/><polyline points="162.48,40.07 166.99,40.96" fill="none" stroke="#60605a" stroke-width="0.8" stroke-linecap="round"/><polyline points="166.99,40.96 171.52,41.86" fill="none" stroke="#60605a" stroke-width="0.8" stroke-linecap="round"/><polyline points="166.99,40.96 164.41,44.18" fill="none" stroke="#60605a" stroke-width="0.8" stroke-linecap="round"/><polyline points="168.27,45.96 165.67,49.22" fill="none" stroke="#60605a" stroke-width="0.8" stroke-linecap="round"/><polyline points="165.67,49.22 161.10,48.31" fill="none" stroke="#60605a" stroke-width="0.8" stroke-linecap="round"/><polyline points="161.10,48.31 156.54,47.39" fill="none" stroke="#60605a" stroke-width="0.8" stroke-linecap="round"/><polyline points="159.17,44.14 156.54,47.39" fill="none" stroke="#60605a" stroke-width="0.8" stroke-linecap="round"/><polyline points="159.17,44.14 163.71,45.05" fill="none" stroke="#60605a" stroke-width="0.8" stroke-linecap="round"/><polyline points="163.71,45.05 168.27,45.96" fill="none" stroke="#60605a" stroke-width="0.8" stroke-linecap="round"/><polyline points="266.87,208.40 274.23,210.23" fill="none" stroke="#60605a" stroke-width="0.8" stroke-linecap="round"/><polyline points="274.23,210.23 272.11,214.72" fill="none" stroke="#60605a" stroke-width="0.8" stroke-linecap="round"/><polyline points="272.11,214.72 269.97,219.27" fill="none" stroke="#60605a" stroke-width="0.8" stroke-linecap="round"/><polyline points="262.53,217.40 269.97,219.27" fill="none" stroke="#60605a" stroke-width="0.8" stroke-linecap="round"/><polyline points="262.53,217.40 264.72,212.87" fill="none" stroke="#60605a" stroke-width="0.8" stroke-linecap="round"/><polyline points="264.72,212.87 266.87,208.40" fill="none" stroke="#60605a" stroke-width="0.8" stroke-linecap="round"/><polyline points="264.72,212.87 272.11,214.72" fill="none" stroke="#60605a" stroke-width="0.8" stroke-linecap="round"/><polyline points="276.22,210.72 283.62,212.55" fill="none" stroke="#60605a" stroke-width="0.8" stroke-linecap="round"/><polyline points="283.62,212.55 281.56,217.08" fill="none" stroke="#60605a" stroke-width="0.8" stroke-linecap="round"/><polyline points="281.56,217.08 279.46,221.66" fill="none" stroke="#60605a" stroke-width="0.8" stroke-linecap="round"/><polyline points="271.98,219.78 279.46,221.66" fill="none" stroke="#60605a" stroke-width="0.8" stroke-linecap="round"/><polyline points="271.98,219.78 274.11,215.22" fill="none" stroke="#60605a" stroke-width="0.8" stroke-linecap="round"/><polyline points="274.11,215.22 276.22,210.72" fill="none" stroke="#60605a" stroke-width="0.8" stroke-linecap="round"/><polyline points="189.40,19.32 185.03,18.49" fill="none" stroke="#60605a" stroke-width="0.8" stroke-linecap="round"/><polyline points="185.03,18.49 180.67,17.67" fill="none" stroke="#60605a" stroke-width="0.8" stroke-linecap="round"/><polyline points="188.77,20.12 186.41,23.09" fill="none" stroke="#60605a" stroke-width="0.8" stroke-linecap="round"/><polyline points="186.41,23.09 182.01,22.26" fill="none" stroke="#60605a" stroke-width="0.8" stroke-linecap="round"/><polyline points="182.01,22.26 177.62,21.42" fill="none" stroke="#60605a" stroke-width="0.8" stroke-linecap="round"/><polyline points="180.03,18.46 177.62,21.42" fill="none" stroke="#60605a" stroke-width="0.8" stroke-linecap="round"/><polyline points="180.03,18.46 184.39,19.29" fill="none" stroke="#60605a" stroke-width="0.8" stroke-linecap="round"/><polyline points="184.39,19.29 188.77,20.12" fill="none" stroke="#60605a" stroke-width="0.8" stroke-linecap="round"/><polyline points="185.77,23.90 183.37,26.92" fill="none" stroke="#60605a" stroke-width="0.8" stroke-linecap="round"/><polyline points="183.37,26.92 178.95,26.07" fill="none" stroke="#60605a" stroke-width="0.8" stroke-linecap="round"/><polyline points="178.95,26.07 174.53,25.23" fill="none" stroke="#60605a" stroke-width="0.8" stroke-linecap="round"/><polyline points="176.97,22.23 174.53,25.23" fill="none" stroke="#60605a" stroke-width="0.8" stroke-linecap="round"/><polyline points="176.97,22.23 181.36,23.06" fill="none" stroke="#60605a" stroke-width="0.8" stroke-linecap="round"/><polyline points="181.36,23.06 185.77,23.90" fill="none" stroke="#60605a" stroke-width="0.8" stroke-linecap="round"/><polyline points="332.07,224.57 330.28,229.25" fill="none" stroke="#60605a" stroke-width="0.8" stroke-linecap="round"/><polyline points="330.28,229.25 328.46,233.98" fill="none" stroke="#60605a" stroke-width="0.8" stroke-linecap="round"/><polyline points="334.14,225.08 341.84,226.99" fill="none" stroke="#60605a" stroke-width="0.8" stroke-linecap="round"/><polyline points="341.84,226.99 340.09,231.70" fill="none" stroke="#60605a" stroke-width="0.8" stroke-linecap="round"/><polyline points="340.09,231.70 338.33,236.46" fill="none" stroke="#60605a" stroke-width="0.8" stroke-linecap="round"/><polyline points="330.55,234.50 338.33,236.46" fill="none" stroke="#60605a" stroke-width="0.8" stroke-linecap="round"/><polyline points="330.55,234.50 332.35,229.76" fill="none" stroke="#60605a" stroke-width="0.8" stroke-linecap="round"/><polyline points="332.35,229.76 334.14,225.08" fill="none" stroke="#60605a" stroke-width="0.8" stroke-linecap="round"/><polyline points="343.91,227.51 351.66,229.43" fill="none" stroke="#60605a" stroke-width="0.8" stroke-linecap="round"/><polyline points="351.66,229.43 349.98,234.16" fill="none" stroke="#60605a" stroke-width="0.8" stroke-linecap="round"/><polyline points="349.98,234.16 348.27,238.96" fill="none" stroke="#60605a" stroke-width="0.8" stroke-linecap="round"/><polyline points="340.44,236.99 348.27,238.96" fill="none" stroke="#60605a" stroke-width="0.8" stroke-linecap="round"/><polyline points="340.44,236.99 342.19,232.22" fill="none" stroke="#60605a" stroke-width="0.8" stroke-linecap="round"/><polyline points="342.19,232.22 343.91,227.51" fill="none" stroke="#60605a" stroke-width="0.8" stroke-linecap="round"/><polyline points="206.70,-2.48 202.48,-3.24" fill="none" stroke="#60605a" stroke-width="0.8" stroke-linecap="round"/><polyline points="202.48,-3.24 198.27,-4.00" fill="none" stroke="#60605a" stroke-width="0.8" stroke-linecap="round"/><polyline points="206.12,-1.75 203.94,0.99" fill="none" stroke="#60605a" stroke-width="0.8" stroke-linecap="round"/><polyline points="203.94,0.99 199.70,0.22" fill="none" stroke="#60605a" stroke-width="0.8" stroke-linecap="round"/><polyline points="201.89,-2.51 199.70,0.22" fill="none" stroke="#60605a" stroke-width="0.8" stroke-linecap="round"/><polyline points="197.68,-3.27 201.89,-2.51" fill="none" stroke="#60605a" stroke-width="0.8" stroke-linecap="round"/><polyline points="197.68,-3.27 195.46,-0.55" fill="none" stroke="#60605a" stroke-width="0.8" stroke-linecap="round"/><polyline points="203.35,1.74 201.15,4.52" fill="none" stroke="#60605a" stroke-width="0.8" stroke-linecap="round"/><polyline points="201.15,4.52 196.88,3.74" fill="none" stroke="#60605a" stroke-width="0.8" stroke-linecap="round"/><polyline points="196.88,3.74 192.62,2.96" fill="none" stroke="#60605a" stroke-width="0.8" stroke-linecap="round"/><polyline points="194.86,0.19 192.62,2.96" fill="none" stroke="#60605a" stroke-width="0.8" stroke-linecap="round"/><polyline points="194.86,0.19 199.10,0.96" fill="none" stroke="#60605a" stroke-width="0.8" stroke-linecap="round"/><polyline points="199.10,0.96 203.35,1.74" fill="none" stroke="#60605a" stroke-width="0.8" stroke-linecap="round"/><polyline points="392.23,239.49 390.78,244.35" fill="none" stroke="#60605a" stroke-width="0.8" stroke-linecap="round"/><polyline points="390.78,244.35 389.31,249.28" fill="none" stroke="#60605a" stroke-width="0.8" stroke-linecap="round"/><polyline points="394.38,240.02 402.38,242.01" fill="none" stroke="#60605a" stroke-width="0.8" stroke-linecap="round"/><polyline points="402.38,242.01 401.00,246.91" fill="none" stroke="#60605a" stroke-width="0.8" stroke-linecap="round"/><polyline points="392.94,244.89 401.00,246.91" fill="none" stroke="#60605a" stroke-width="0.8" stroke-linecap="round"/><polyline points="391.49,249.83 392.94,244.89" fill="none" stroke="#60605a" stroke-width="0.8" stroke-linecap="round"/><polyline points="391.49,249.83 399.59,251.86" fill="none" stroke="#60605a" stroke-width="0.8" stroke-linecap="round"/><polyline points="404.55,242.55 412.61,244.54" fill="none" stroke="#60605a" stroke-width="0.8" stroke-linecap="round"/><polyline points="412.61,244.54 411.28,249.47" fill="none" stroke="#60605a" stroke-width="0.8" stroke-linecap="round"/><polyline points="411.28,249.47 409.94,254.47" fill="none" stroke="#60605a" stroke-width="0.8" stroke-linecap="round"/><polyline points="401.78,252.41 409.94,254.47" fill="none" stroke="#60605a" stroke-width="0.8" stroke-linecap="round"/><polyline points="401.78,252.41 403.17,247.45" fill="none" stroke="#60605a" stroke-width="0.8" stroke-linecap="round"/><polyline points="403.17,247.45 404.55,242.55" fill="none" stroke="#60605a" stroke-width="0.8" stroke-linecap="round"/><polyline points="222.66,-22.60 218.58,-23.30" fill="none" stroke="#60605a" stroke-width="0.8" stroke-linecap="round"/><polyline points="218.58,-23.30 214.51,-24.00" fill="none" stroke="#60605a" stroke-width="0.8" stroke-linecap="round"/><polyline points="218.04,-22.62 222.12,-21.92" fill="none" stroke="#60605a" stroke-width="0.8" stroke-linecap="round"/><polyline points="218.04,-22.62 216.01,-20.10" fill="none" stroke="#60605a" stroke-width="0.8" stroke-linecap="round"/><polyline points="220.11,-19.38 216.01,-20.10" fill="none" stroke="#60605a" stroke-width="0.8" stroke-linecap="round"/><polyline points="216.01,-20.10 211.92,-20.81" fill="none" stroke="#60605a" stroke-width="0.8" stroke-linecap="round"/><polyline points="219.57,-18.70 217.53,-16.13" fill="none" stroke="#60605a" stroke-width="0.8" stroke-linecap="round"/><polyline points="217.53,-16.13 213.41,-16.85" fill="none" stroke="#60605a" stroke-width="0.8" stroke-linecap="round"/><polyline points="213.41,-16.85 209.29,-17.57" fill="none" stroke="#60605a" stroke-width="0.8" stroke-linecap="round"/><polyline points="211.36,-20.12 209.29,-17.57" fill="none" stroke="#60605a" stroke-width="0.8" stroke-linecap="round"/><polyline points="211.36,-20.12 215.46,-19.41" fill="none" stroke="#60605a" stroke-width="0.8" stroke-linecap="round"/><polyline points="215.46,-19.41 219.57,-18.70" fill="none" stroke="#60605a" stroke-width="0.8" stroke-linecap="round"/><polyline points="454.84,255.02 453.77,260.08" fill="none" stroke="#60605a" stroke-width="0.8" stroke-linecap="round"/><polyline points="453.77,260.08 452.68,265.21" fill="none" stroke="#60605a" stroke-width="0.8" stroke-linecap="round"/><polyline points="456.02,260.64 457.07,255.57" fill="none" stroke="#60605a" stroke-width="0.8" stroke-linecap="round"/><polyline points="456.02,260.64 464.41,262.74" fill="none" stroke="#60605a" stroke-width="0.8" stroke-linecap="round"/><polyline points="465.41,257.64 464.41,262.74" fill="none" stroke="#60605a" stroke-width="0.8" stroke-linecap="round"/><polyline points="464.41,262.74 463.39,267.91" fill="none" stroke="#60605a" stroke-width="0.8" stroke-linecap="round"/><polyline points="467.66,258.20 476.06,260.28" fill="none" stroke="#60605a" stroke-width="0.8" stroke-linecap="round"/><polyline points="476.06,260.28 475.12,265.42" fill="none" stroke="#60605a" stroke-width="0.8" stroke-linecap="round"/><polyline points="475.12,265.42 474.17,270.62" fill="none" stroke="#60605a" stroke-width="0.8" stroke-linecap="round"/><polyline points="465.67,268.48 474.17,270.62" fill="none" stroke="#60605a" stroke-width="0.8" stroke-linecap="round"/><polyline points="465.67,268.48 466.67,263.31" fill="none" stroke="#60605a" stroke-width="0.8" stroke-linecap="round"/><polyline points="466.67,263.31 467.66,258.20" fill="none" stroke="#60605a" stroke-width="0.8" stroke-linecap="round"/><polyline points="520.05,271.19 519.39,276.47" fill="none" stroke="#60605a" stroke-width="0.8" stroke-linecap="round"/><polyline points="519.39,276.47 518.73,281.82" fill="none" stroke="#60605a" stroke-width="0.8" stroke-linecap="round"/><polyline points="522.38,271.77 531.07,273.92" fill="none" stroke="#60605a" stroke-width="0.8" stroke-linecap="round"/><polyline points="521.74,277.06 522.38,271.77" fill="none" stroke="#60605a" stroke-width="0.8" stroke-linecap="round"/><polyline points="521.09,282.41 521.74,277.06" fill="none" stroke="#60605a" stroke-width="0.8" stroke-linecap="round"/><polyline points="521.09,282.41 529.89,284.63" fill="none" stroke="#60605a" stroke-width="0.8" stroke-linecap="round"/><polyline points="530.49,279.24 529.89,284.63" fill="none" stroke="#60605a" stroke-width="0.8" stroke-linecap="round"/><polyline points="521.74,277.06 530.49,279.24" fill="none" stroke="#60605a" stroke-width="0.8" stroke-linecap="round"/><polyline points="533.42,274.51 542.17,276.68" fill="none" stroke="#60605a" stroke-width="0.8" stroke-linecap="round"/><polyline points="542.17,276.68 541.66,282.03" fill="none" stroke="#60605a" stroke-width="0.8" stroke-linecap="round"/><polyline points="541.66,282.03 541.14,287.45" fill="none" stroke="#60605a" stroke-width="0.8" stroke-linecap="round"/><polyline points="532.27,285.22 541.14,287.45" fill="none" stroke="#60605a" stroke-width="0.8" stroke-linecap="round"/><polyline points="532.27,285.22 532.85,279.83" fill="none" stroke="#60605a" stroke-width="0.8" stroke-linecap="round"/><polyline points="532.85,279.83 533.42,274.51" fill="none" stroke="#60605a" stroke-width="0.8" stroke-linecap="round"/><path d="M56.0,266.6 L56.0,254.2" stroke="#9090c0" stroke-width="0.6"/><path d="M56.0,266.6 L61.7,254.5" stroke="#80c890" stroke-width="0.6"/><path d="M56.0,266.6 L71.3,270.1" stroke="#e07070" stroke-width="0.6"/><text x="55.0" y="253.2" font-family="Liberation Sans" font-size="3" fill="#555">z</text><text x="61.3" y="254.4" font-family="Liberation Sans" font-size="3" fill="#8a8">y</text><text x="73.0" y="272.6" font-family="Liberation Sans" font-size="3" fill="#555">x</text><polygon points="52.61,167.28 518.01,284.75 533.06,241.15 40.44,124.08" fill="#6e5f19"/><polygon points="40.44,124.08 533.06,241.15 548.31,105.53 129.92,24.16" fill="#eed83c"/><g clip-path="url(#c1)"><polygon points="56.02,164.01 93.65,173.45 114.18,146.28 77.73,137.55" fill="#95c04c"/><polygon points="77.73,137.55 114.18,146.28 105.99,105.39 67.88,96.80" fill="#4b5e22"/><polygon points="56.02,164.01 77.73,137.55 67.88,96.80 44.65,122.88" fill="#749a3a"/></g><polygon points="44.65,122.88 84.06,132.22 105.99,105.39 67.88,96.80" fill="none" stroke="#e4d03a" stroke-width="0.55"/><g clip-path="url(#c2)"><polygon points="79.12,135.86 115.49,144.54 134.37,119.54 99.11,111.50" fill="#95c04c"/><polygon points="99.11,111.50 134.37,119.54 127.48,79.10 90.67,71.21" fill="#4b5e22"/><polygon points="79.12,135.86 99.11,111.50 90.67,71.21 69.36,95.14" fill="#749a3a"/></g><polygon points="69.36,95.14 107.39,103.68 127.48,79.10 90.67,71.21" fill="none" stroke="#e4d03a" stroke-width="0.55"/><g clip-path="url(#c3)"><polygon points="100.39,109.94 135.58,117.94 153.01,94.86 118.87,87.42" fill="#95c04c"/><polygon points="118.87,87.42 153.01,94.86 147.25,54.93 111.64,47.66" fill="#4b5e22"/><polygon points="100.39,109.94 118.87,87.42 111.64,47.66 92.03,69.69" fill="#749a3a"/></g><polygon points="92.03,69.69 128.77,77.53 147.25,54.93 111.64,47.66" fill="none" stroke="#e4d03a" stroke-width="0.55"/><g clip-path="url(#c4)"><polygon points="120.05,85.97 154.13,93.38 170.27,72.01 137.18,65.11" fill="#95c04c"/><polygon points="137.18,65.11 170.27,72.01 165.49,32.62 131.02,25.90" fill="#4b5e22"/><polygon points="120.05,85.97 137.18,65.11 131.02,25.90 112.90,46.25" fill="#749a3a"/></g><polygon points="112.90,46.25 148.43,53.48 165.49,32.62 131.02,25.90" fill="none" stroke="#e4d03a" stroke-width="0.55"/><g clip-path="url(#c5)"><polygon points="96.20,174.09 134.95,183.81 154.13,155.84 116.64,146.87" fill="#95c04c"/><polygon points="116.64,146.87 154.13,155.84 147.83,114.82 108.57,105.97" fill="#4b5e22"/><polygon points="96.20,174.09 116.64,146.87 108.57,105.97 86.73,132.85" fill="#749a3a"/></g><polygon points="86.73,132.85 127.37,142.47 147.83,114.82 108.57,105.97" fill="none" stroke="#e4d03a" stroke-width="0.55"/><g clip-path="url(#c6)"><polygon points="117.95,145.13 155.36,154.05 172.99,128.35 136.76,120.08" fill="#95c04c"/><polygon points="136.76,120.08 172.99,128.35 167.85,87.75 129.97,79.64" fill="#4b5e22"/><polygon points="117.95,145.13 136.76,120.08 129.97,79.64 109.96,104.26" fill="#749a3a"/></g><polygon points="109.96,104.26 149.13,113.06 167.85,87.75 129.97,79.64" fill="none" stroke="#e4d03a" stroke-width="0.55"/><g clip-path="url(#c7)"><polygon points="137.96,118.48 174.11,126.70 190.37,103.00 155.32,95.36" fill="#95c04c"/><polygon points="155.32,95.36 190.37,103.00 186.24,62.89 149.66,55.42" fill="#4b5e22"/><polygon points="137.96,118.48 155.32,95.36 149.66,55.42 131.25,78.06" fill="#749a3a"/></g><polygon points="131.25,78.06 169.05,86.14 186.24,62.89 149.66,55.42" fill="none" stroke="#e4d03a" stroke-width="0.55"/><g clip-path="url(#c8)"><polygon points="156.43,93.88 191.41,101.48 206.45,79.55 172.51,72.47" fill="#95c04c"/><polygon points="172.51,72.47 206.45,79.55 203.19,39.98 167.81,33.08" fill="#4b5e22"/><polygon points="156.43,93.88 172.51,72.47 167.81,33.08 150.83,53.97" fill="#749a3a"/></g><polygon points="150.83,53.97 187.34,61.40 203.19,39.98 167.81,33.08" fill="none" stroke="#e4d03a" stroke-width="0.55"/><g clip-path="url(#c9)"><polygon points="137.57,184.47 177.50,194.49 195.25,165.68 156.67,156.45" fill="#95c04c"/><polygon points="156.67,156.45 195.25,165.68 190.94,124.53 150.48,115.42" fill="#4b5e22"/><polygon points="137.57,184.47 156.67,156.45 150.48,115.42 130.12,143.13" fill="#749a3a"/></g><polygon points="130.12,143.13 172.06,153.06 190.94,124.53 150.48,115.42" fill="none" stroke="#e4d03a" stroke-width="0.55"/><g clip-path="url(#c10)"><polygon points="157.89,154.66 196.38,163.84 212.67,137.40 175.43,128.91" fill="#95c04c"/><polygon points="175.43,128.91 212.67,137.40 209.40,96.65 170.41,88.30" fill="#4b5e22"/><polygon points="157.89,154.66 175.43,128.91 170.41,88.30 151.78,113.65" fill="#749a3a"/></g><polygon points="151.78,113.65 192.14,122.72 209.40,96.65 170.41,88.30" fill="none" stroke="#e4d03a" stroke-width="0.55"/><g clip-path="url(#c11)"><polygon points="176.56,127.26 213.72,135.71 228.72,111.35 192.74,103.51" fill="#95c04c"/><polygon points="192.74,103.51 228.72,111.35 226.33,71.07 188.72,63.39" fill="#4b5e22"/><polygon points="176.56,127.26 192.74,103.51 188.72,63.39 171.60,86.68" fill="#749a3a"/></g><polygon points="171.60,86.68 210.50,94.99 226.33,71.07 188.72,63.39" fill="none" stroke="#e4d03a" stroke-width="0.55"/><g clip-path="url(#c12)"><polygon points="193.77,101.99 229.68,109.79 243.55,87.29 208.74,80.03" fill="#95c04c"/><polygon points="208.74,80.03 243.55,87.29 241.91,47.53 205.58,40.44" fill="#4b5e22"/><polygon points="193.77,101.99 208.74,80.03 205.58,40.44 189.81,61.91" fill="#749a3a"/></g><polygon points="189.81,61.91 227.34,69.55 241.91,47.53 205.58,40.44" fill="none" stroke="#e4d03a" stroke-width="0.55"/><g clip-path="url(#c13)"><polygon points="180.20,195.17 221.36,205.49 237.58,175.81 197.86,166.30" fill="#95c04c"/><polygon points="197.86,166.30 237.58,175.81 235.39,134.55 193.68,125.15" fill="#4b5e22"/><polygon points="180.20,195.17 197.86,166.30 193.68,125.15 174.90,153.73" fill="#749a3a"/></g><polygon points="174.90,153.73 218.19,163.98 235.39,134.55 193.68,125.15" fill="none" stroke="#e4d03a" stroke-width="0.55"/><g clip-path="url(#c14)"><polygon points="198.99,164.46 238.61,173.92 253.48,146.71 215.19,137.97" fill="#95c04c"/><polygon points="215.19,137.97 253.48,146.71 252.17,105.82 212.03,97.22" fill="#4b5e22"/><polygon points="198.99,164.46 215.19,137.97 212.03,97.22 194.87,123.33" fill="#749a3a"/></g><polygon points="194.87,123.33 236.48,132.68 252.17,105.82 212.03,97.22" fill="none" stroke="#e4d03a" stroke-width="0.55"/><g clip-path="url(#c15)"><polygon points="216.23,136.28 254.43,144.97 268.11,119.94 231.15,111.88" fill="#95c04c"/><polygon points="231.15,111.88 268.11,119.94 267.55,79.49 228.87,71.59" fill="#4b5e22"/><polygon points="216.23,136.28 231.15,111.88 228.87,71.59 213.13,95.55" fill="#749a3a"/></g><polygon points="213.13,95.55 253.17,104.10 267.55,79.49 228.87,71.59" fill="none" stroke="#e4d03a" stroke-width="0.55"/><g clip-path="url(#c16)"><polygon points="232.11,110.32 268.99,118.33 281.62,95.23 245.90,87.78" fill="#95c04c"/><polygon points="245.90,87.78 281.62,95.23 281.69,55.29 244.37,48.01" fill="#4b5e22"/><polygon points="232.11,110.32 245.90,87.78 244.37,48.01 229.88,70.06" fill="#749a3a"/></g><polygon points="229.88,70.06 268.47,77.92 281.69,55.29 244.37,48.01" fill="none" stroke="#e4d03a" stroke-width="0.55"/><g clip-path="url(#c17)"><polygon points="224.14,206.19 266.58,216.84 281.17,186.24 240.27,176.45" fill="#95c04c"/><polygon points="240.27,176.45 281.17,186.24 281.23,144.88 238.21,135.19" fill="#4b5e22"/><polygon points="224.14,206.19 240.27,176.45 238.21,135.19 221.12,164.68" fill="#749a3a"/></g><polygon points="221.12,164.68 265.84,175.27 281.23,144.88 238.21,135.19" fill="none" stroke="#e4d03a" stroke-width="0.55"/><g clip-path="url(#c18)"><polygon points="241.29,174.56 282.10,184.29 295.46,156.28 256.07,147.30" fill="#95c04c"/><polygon points="256.07,147.30 295.46,156.28 296.23,115.26 254.89,106.40" fill="#4b5e22"/><polygon points="241.29,174.56 256.07,147.30 254.89,106.40 239.30,133.31" fill="#749a3a"/></g><polygon points="239.30,133.31 282.21,142.95 296.23,115.26 254.89,106.40" fill="none" stroke="#e4d03a" stroke-width="0.55"/><g clip-path="url(#c19)"><polygon points="257.01,145.56 296.31,154.49 308.59,128.75 270.61,120.48" fill="#95c04c"/><polygon points="270.61,120.48 308.59,128.75 309.96,88.15 270.17,80.03" fill="#4b5e22"/><polygon points="257.01,145.56 270.61,120.48 270.17,80.03 255.88,104.68" fill="#749a3a"/></g><polygon points="255.88,104.68 297.13,113.49 309.96,88.15 270.17,80.03" fill="none" stroke="#e4d03a" stroke-width="0.55"/><g clip-path="url(#c20)"><polygon points="271.48,118.88 309.37,127.11 320.69,103.37 284.03,95.73" fill="#95c04c"/><polygon points="284.03,95.73 320.69,103.37 322.56,63.26 284.21,55.78" fill="#4b5e22"/><polygon points="271.48,118.88 284.03,95.73 284.21,55.78 271.08,78.45" fill="#749a3a"/></g><polygon points="271.08,78.45 310.78,86.53 322.56,63.26 284.21,55.78" fill="none" stroke="#e4d03a" stroke-width="0.55"/><g clip-path="url(#c21)"><polygon points="269.45,217.56 313.24,228.54 326.09,196.99 283.94,186.90" fill="#95c04c"/><polygon points="283.94,186.90 326.09,196.99 328.55,155.54 284.15,145.54" fill="#4b5e22"/><polygon points="269.45,217.56 283.94,186.90 284.15,145.54 268.88,175.99" fill="#749a3a"/></g><polygon points="268.88,175.99 315.09,186.93 328.55,155.54 284.15,145.54" fill="none" stroke="#e4d03a" stroke-width="0.55"/><g clip-path="url(#c22)"><polygon points="284.86,184.95 326.91,194.98 338.66,166.14 298.12,156.89" fill="#95c04c"/><polygon points="298.12,156.89 338.66,166.14 341.64,124.98 299.03,115.86" fill="#4b5e22"/><polygon points="284.86,184.95 298.12,156.89 299.03,115.86 285.12,143.60" fill="#749a3a"/></g><polygon points="285.12,143.60 329.40,153.55 341.64,124.98 299.03,115.86" fill="none" stroke="#e4d03a" stroke-width="0.55"/><g clip-path="url(#c23)"><polygon points="298.97,155.10 339.41,164.29 350.19,137.82 311.15,129.31" fill="#95c04c"/><polygon points="311.15,129.31 350.19,137.82 353.61,97.06 312.65,88.70" fill="#4b5e22"/><polygon points="298.97,155.10 311.15,129.31 312.65,88.70 299.92,114.09" fill="#749a3a"/></g><polygon points="299.92,114.09 342.42,123.17 353.61,97.06 312.65,88.70" fill="none" stroke="#e4d03a" stroke-width="0.55"/><g clip-path="url(#c24)"><polygon points="311.93,127.66 350.88,136.13 360.81,111.74 323.17,103.89" fill="#95c04c"/><polygon points="323.17,103.89 360.81,111.74 364.58,71.45 325.16,63.76" fill="#4b5e22"/><polygon points="311.93,127.66 323.17,103.89 325.16,63.76 313.46,87.08" fill="#749a3a"/></g><polygon points="313.46,87.08 354.32,95.40 364.58,71.45 325.16,63.76" fill="none" stroke="#e4d03a" stroke-width="0.55"/><g clip-path="url(#c25)"><polygon points="316.20,229.29 361.40,240.63 372.39,208.07 328.94,197.67" fill="#95c04c"/><polygon points="328.94,197.67 372.39,208.07 377.40,166.55 331.55,156.22" fill="#4b5e22"/><polygon points="316.20,229.29 328.94,197.67 331.55,156.22 318.23,187.68" fill="#749a3a"/></g><polygon points="318.23,187.68 366.02,199.00 377.40,166.55 331.55,156.22" fill="none" stroke="#e4d03a" stroke-width="0.55"/><g clip-path="url(#c26)"><polygon points="329.75,195.66 373.09,206.00 383.13,176.28 341.40,166.76" fill="#95c04c"/><polygon points="341.40,166.76 383.13,176.28 388.46,135.01 344.53,125.60" fill="#4b5e22"/><polygon points="329.75,195.66 341.40,166.76 344.53,125.60 332.40,154.22" fill="#749a3a"/></g><polygon points="332.40,154.22 378.12,164.49 388.46,135.01 344.53,125.60" fill="none" stroke="#e4d03a" stroke-width="0.55"/><g clip-path="url(#c27)"><polygon points="342.14,164.92 383.77,174.38 392.97,147.14 352.83,138.39" fill="#95c04c"/><polygon points="352.83,138.39 392.97,147.14 398.55,106.24 356.38,97.63" fill="#4b5e22"/><polygon points="342.14,164.92 352.83,138.39 356.38,97.63 345.30,123.78" fill="#749a3a"/></g><polygon points="345.30,123.78 389.12,133.14 398.55,106.24 356.38,97.63" fill="none" stroke="#e4d03a" stroke-width="0.55"/><g clip-path="url(#c28)"><polygon points="353.51,136.70 393.55,145.40 402.02,120.33 363.35,112.27" fill="#95c04c"/><polygon points="363.35,112.27 402.02,120.33 407.80,79.88 367.25,71.97" fill="#4b5e22"/><polygon points="353.51,136.70 363.35,112.27 367.25,71.97 357.09,95.96" fill="#749a3a"/></g><polygon points="357.09,95.96 399.15,104.53 407.80,79.88 367.25,71.97" fill="none" stroke="#e4d03a" stroke-width="0.55"/><g clip-path="url(#c29)"><polygon points="364.46,241.40 411.13,253.11 420.14,219.50 375.33,208.78" fill="#95c04c"/><polygon points="375.33,208.78 420.14,219.50 427.86,177.92 380.50,167.25" fill="#4b5e22"/><polygon points="364.46,241.40 375.33,208.78 380.50,167.25 369.26,199.76" fill="#749a3a"/></g><polygon points="369.26,199.76 418.70,211.47 427.86,177.92 380.50,167.25" fill="none" stroke="#e4d03a" stroke-width="0.55"/><g clip-path="url(#c30)"><polygon points="376.02,206.70 420.71,217.36 428.93,186.73 385.95,176.92" fill="#95c04c"/><polygon points="385.95,176.92 428.93,186.73 436.75,145.36 391.43,135.65" fill="#4b5e22"/><polygon points="376.02,206.70 385.95,176.92 391.43,135.65 381.22,165.19" fill="#749a3a"/></g><polygon points="381.22,165.19 428.44,175.79 436.75,145.36 391.43,135.65" fill="none" stroke="#e4d03a" stroke-width="0.55"/><g clip-path="url(#c31)"><polygon points="386.58,175.02 429.45,184.77 436.97,156.73 395.68,147.73" fill="#95c04c"/><polygon points="395.68,147.73 436.97,156.73 444.85,115.69 401.40,106.82" fill="#4b5e22"/><polygon points="386.58,175.02 395.68,147.73 401.40,106.82 392.08,133.77" fill="#749a3a"/></g><polygon points="392.08,133.77 437.28,143.43 444.85,115.69 401.40,106.82" fill="none" stroke="#e4d03a" stroke-width="0.55"/><g clip-path="url(#c32)"><polygon points="396.26,145.99 437.45,154.93 444.36,129.16 404.63,120.88" fill="#95c04c"/><polygon points="404.63,120.88 444.36,129.16 452.25,88.55 410.54,80.42" fill="#4b5e22"/><polygon points="396.26,145.99 404.63,120.88 410.54,80.42 402.00,105.11" fill="#749a3a"/></g><polygon points="402.00,105.11 445.33,113.93 452.25,88.55 410.54,80.42" fill="none" stroke="#e4d03a" stroke-width="0.55"/><g clip-path="url(#c33)"><polygon points="414.30,253.90 462.52,266.00 469.41,231.29 423.18,220.23" fill="#95c04c"/><polygon points="423.18,220.23 469.41,231.29 480.02,189.68 431.07,178.65" fill="#4b5e22"/><polygon points="414.30,253.90 423.18,220.23 431.07,178.65 422.06,212.27" fill="#749a3a"/><polygon points="462.52,266.00 469.41,231.29 480.02,189.68 473.25,224.39" fill="#6c9438"/></g><polygon points="422.06,212.27 473.25,224.39 480.02,189.68 431.07,178.65" fill="none" stroke="#e4d03a" stroke-width="0.55"/><g clip-path="url(#c34)"><polygon points="423.74,218.09 469.85,229.09 476.12,197.49 431.84,187.39" fill="#95c04c"/><polygon points="431.84,187.39 476.12,197.49 486.58,156.04 439.82,146.02" fill="#4b5e22"/><polygon points="423.74,218.09 431.84,187.39 439.82,146.02 431.64,176.51" fill="#749a3a"/><polygon points="469.85,229.09 476.12,197.49 486.58,156.04 480.45,187.48" fill="#6c9438"/></g><polygon points="431.64,176.51 480.45,187.48 486.58,156.04 439.82,146.02" fill="none" stroke="#e4d03a" stroke-width="0.55"/><g clip-path="url(#c35)"><polygon points="432.35,185.43 476.52,195.48 482.25,166.59 439.76,157.33" fill="#95c04c"/><polygon points="439.76,157.33 482.25,166.59 492.56,125.44 447.79,116.29" fill="#4b5e22"/><polygon points="432.35,185.43 439.76,157.33 447.79,116.29 440.34,144.08" fill="#749a3a"/><polygon points="476.52,195.48 482.25,166.59 492.56,125.44 486.97,154.04" fill="#6c9438"/></g><polygon points="440.34,144.08 486.97,154.04 492.56,125.44 447.79,116.29" fill="none" stroke="#e4d03a" stroke-width="0.55"/><g clip-path="url(#c36)"><polygon points="440.23,155.54 482.62,164.75 487.88,138.24 447.04,129.72" fill="#95c04c"/><polygon points="447.04,129.72 487.88,138.24 498.01,97.48 455.08,89.10" fill="#4b5e22"/><polygon points="440.23,155.54 447.04,129.72 455.08,89.10 448.26,114.52" fill="#749a3a"/><polygon points="482.62,164.75 487.88,138.24 498.01,97.48 492.91,123.61" fill="#6c9438"/></g><polygon points="448.26,114.52 492.91,123.61 498.01,97.48 455.08,89.10" fill="none" stroke="#e4d03a" stroke-width="0.55"/><g clip-path="url(#c37)"><polygon points="465.79,266.82 515.65,279.33 520.27,243.47 472.54,232.04" fill="#95c04c"/><polygon points="472.54,232.04 520.27,243.47 533.96,201.83 483.34,190.42" fill="#4b5e22"/><polygon points="515.65,279.33 520.27,243.47 533.96,201.83 529.74,237.77" fill="#6c9438"/></g><polygon points="476.72,225.21 529.74,237.77 533.96,201.83 483.34,190.42" fill="none" stroke="#e4d03a" stroke-width="0.55"/><g clip-path="url(#c38)"><polygon points="472.97,229.83 520.57,241.19 524.77,208.59 479.12,198.17" fill="#95c04c"/><polygon points="479.12,198.17 524.77,208.59 538.04,167.06 489.75,156.72" fill="#4b5e22"/><polygon points="520.57,241.19 524.77,208.59 538.04,167.06 534.23,199.56" fill="#6c9438"/></g><polygon points="483.76,188.22 534.23,199.56 538.04,167.06 489.75,156.72" fill="none" stroke="#e4d03a" stroke-width="0.55"/><g clip-path="url(#c39)"><polygon points="479.51,196.16 525.04,206.51 528.87,176.75 485.13,167.22" fill="#95c04c"/><polygon points="485.13,167.22 528.87,176.75 541.75,135.48 495.59,126.05" fill="#4b5e22"/><polygon points="525.04,206.51 528.87,176.75 541.75,135.48 538.28,165.00" fill="#6c9438"/></g><polygon points="490.13,154.71 538.28,165.00 541.75,135.48 495.59,126.05" fill="none" stroke="#e4d03a" stroke-width="0.55"/><g clip-path="url(#c40)"><polygon points="485.48,165.37 529.11,174.85 532.63,147.57 490.64,138.81" fill="#95c04c"/><polygon points="490.64,138.81 532.63,147.57 545.13,106.67 500.92,98.04" fill="#4b5e22"/><polygon points="529.11,174.85 532.63,147.57 545.13,106.67 541.97,133.60" fill="#6c9438"/></g><polygon points="495.93,124.23 541.97,133.60 545.13,106.67 500.92,98.04" fill="none" stroke="#e4d03a" stroke-width="0.55"/></svg></div>
 <div class="a" style="left:413px;top:41.5px;width:2px;height:402px;background:linear-gradient(90deg,#fff,#ececec)"></div><div class="a" style="left:415px;top:12px;width:1px;height:432px;background:#bcbcbc"></div>
 <div class="a tb" style="left:416px;top:309px;width:560px;height:19px"></div>
 <div class="a dockh" style="left:416px;top:327.5px;width:245px;height:10.5px"><div class="a closeb" style="left:1px"></div><div class="a dockt">Console</div></div>
 <div class="a" style="left:416px;top:338px;width:244.5px;height:106px;background:#fff;border:0.5px solid #c8c8c8">
  <div id="console" class="a">battery_holder_generator.scad&#x27;.
Compiling design (CSG Tree generation)...
ECHO: &quot;Generating a box to hold 40 batteries.&quot;
ECHO: &quot;Box is 65mm (w) x 161mm (l) x 20mm (h) with 1 mm thick walls.&quot;
ECHO: &quot;Each battery compartment is 15mm x 15mm and 19mm deep.&quot;
Compiling design (CSG Products generation)...
Geometries in cache: 2
Geometry cache size in bytes: 1456
CGAL Polyhedrons in cache: 0
CGAL cache size in bytes: 0
Compiling design (CSG Products normalization)...
Normalized tree has 41 elements!
Compile and preview finished.
Total rendering time: 0:00:00.032</div>
 </div>
 <div class="a dockh" style="left:661.5px;top:327.5px;width:314.5px;height:10.5px"><div class="a closeb" style="left:1.5px"></div><div class="a dockt">Error-Log</div></div>
 <div class="a" style="left:661.5px;top:337.5px;width:314.5px;height:106.5px;background:#ececec">
  <div class="a" style="left:5px;top:5.8px;font-size:5.6px;line-height:8px;color:#222">Show</div>
  <div class="a" style="left:28.3px;top:6.3px;width:63.5px;height:7.3px;background:#fff;border-radius:1px;font-size:5px;line-height:7.3px;padding-left:3px;color:#222;box-shadow:0 0.3px 0.4px #c8c8c8">All</div><div class="a" style="left:91.8px;top:6.8px;width:6.7px;height:6.2px;border-radius:1.2px;background:#8a8a8a"><div class="a" style="left:1.6px;top:1.4px;width:3.5px;height:3.4px;border-radius:0.8px;border:0.5px solid #ddd"></div></div>
  <div class="a" style="left:4.5px;top:18.5px;width:304px;height:82px;background:#fff;border:0.5px solid #dcdcdc">
   <div class="a" style="left:0;top:0;width:301px;height:7px;border-bottom:0.5px solid #e4e4e4;font-size:4.5px;line-height:7px;color:#333">
    <span class="a" style="left:10px">Group</span><span class="a" style="left:74px">File</span><span class="a" style="left:134px">Line</span><span class="a" style="left:224px">Info</span>
   </div>
  </div>
 </div>
 <div id="status" class="a"><span class="a" style="left:1.5px;top:0">Viewport: translate = [ 74.79 30.14 5.07 ], rotate = [ 48.00 0.00 18.70 ], distance = 263.43, fov = 22.50 (1289x681)</span><span class="a" style="right:5.5px;top:0;font-size:5.6px">OpenSCAD 2021.01</span></div>
</div>
<svg class="a" style="left:0;top:0" width="1024" height="502" viewBox="0 0 1024 502"><g transform="translate(33.80,47.70) scale(1.000)"><path d="M-3.9,4.1 V-2.3 L-1.6,-4.3 H3.9 V4.1 Z" fill="#f4f4f4" stroke="#555" stroke-width="0.9"/><path d="M-3.9,-2.3 H-1.6 V-4.3" fill="none" stroke="#555" stroke-width="0.7"/><circle cx="-1" cy="1.6" r="1.1" fill="#333"/></g><g transform="translate(53.80,47.70) scale(1.000)"><path d="M-5.3,3 V-2.8 H-2.5 L-1.8,-2 H3.2 V-1 H-4 Z" fill="#222"/><path d="M-5.3,3 L-3.8,-0.6 H5.4 L3.9,3 Z" fill="#222"/><rect x="-4.6" y="0.2" width="8.5" height="0.7" fill="#777"/><rect x="-4.9" y="1.6" width="8.5" height="0.6" fill="#666"/></g><g transform="translate(73.70,47.70) scale(1.000)"><path d="M-4.3,-4.6 V4.2 H4.4 V-4.6 H2.6 V-0.6 H-2.5 V-4.6 Z" fill="#1e1e1e"/><rect x="-2.6" y="1.2" width="5.2" height="1.8" fill="#e4e4e4"/><rect x="-0.8" y="-4.2" width="1.4" height="2.4" fill="#1e1e1e"/></g><g transform="translate(98.50,47.70) scale(1.000)"><g><path d="M-3.2,1 C-2.6,-2.6 2.8,-3.4 4.4,1.8" fill="none" stroke="#1c1c1c" stroke-width="1.7" stroke-linecap="round"/><path d="M-5.4,-0.6 L-1.6,0.2 L-4.2,3.2 Z" fill="#1c1c1c"/></g></g><g transform="translate(117.70,47.70) scale(1.000)"><g transform="scale(-1,1)"><path d="M-3.2,1 C-2.6,-2.6 2.8,-3.4 4.4,1.8" fill="none" stroke="#1c1c1c" stroke-width="1.7" stroke-linecap="round"/><path d="M-5.4,-0.6 L-1.6,0.2 L-4.2,3.2 Z" fill="#1c1c1c"/></g></g><g transform="translate(137.70,47.70) scale(1.000)"><rect x="-5.4" y="-3" width="6.2" height="0.8" fill="#666"/><rect x="-5.4" y="-0.6" width="6.2" height="0.9" fill="#555"/><rect x="-5.4" y="2.4" width="6.2" height="1" fill="#444"/><rect x="2.9" y="-2.4" width="1.1" height="4.6" fill="#333"/><rect x="1.2" y="-0.6" width="4.5" height="1.1" fill="#333"/></g><g transform="translate(157.60,47.70) scale(1.000)"><g transform="scale(-1,1)"><rect x="-5.4" y="-3" width="6.2" height="0.8" fill="#666"/><rect x="-5.4" y="-0.6" width="6.2" height="0.9" fill="#555"/><rect x="-5.4" y="2.4" width="6.2" height="1" fill="#444"/><rect x="2.9" y="-2.4" width="1.1" height="4.6" fill="#333"/><rect x="1.2" y="-0.6" width="4.5" height="1.1" fill="#333"/></g></g><g transform="translate(182.20,47.70) scale(1.000)"><g transform="translate(0,-1.4) scale(0.95)"><path d="M0,-5.2 L4.5,-2.6 L4.5,2.6 L0,5.2 L-4.5,2.6 L-4.5,-2.6 Z M-4.5,-2.6 L0,0 L4.5,-2.6 M0,0 L0,5.2" fill="none" stroke="#555" stroke-width="0.7" stroke-dasharray="1,0.5" stroke-linejoin="round"/></g><path d="M-3.2,2.3 L-0.9,4.2 L-3.2,6.1 M-0.4,2.3 L1.9,4.2 L-0.4,6.1" fill="none" stroke="#111" stroke-width="1.4"/></g><g transform="translate(202.10,47.70) scale(1.000)"><g transform="translate(0,-1) scale(1)"><path d="M0,-5.2 L4.5,-2.6 L4.5,2.6 L0,5.2 L-4.5,2.6 L-4.5,-2.6 Z M-4.5,-2.6 L0,0 L4.5,-2.6 M0,0 L0,5.2" fill="none" stroke="#444" stroke-width="0.8" stroke-linejoin="round"/></g><path d="M0,0.5 V4 M-1.5,2.6 L0,4.2 L1.5,2.6" fill="none" stroke="#333" stroke-width="0.8"/><rect x="-2" y="5.3" width="4" height="0.7" fill="#444"/></g><g transform="translate(225.50,47.70) scale(1.000)"><path d="M-3,-0.6 V-3.4 L0.2,-6.4 H3.2 V-0.6" fill="none" stroke="#444" stroke-width="0.8"/><text x="0" y="4.9" text-anchor="middle" font-family="Liberation Sans" font-weight="bold" font-size="5.8" fill="#111" style="-webkit-font-smoothing:antialiased">STL</text></g><g transform="translate(246.20,47.70) scale(1.000)"><rect x="-0.8" y="-6.2" width="1.6" height="3" fill="#222"/><path d="M-1.8,-3.4 L0,-1.9 L1.8,-3.4" fill="#222"/><path d="M0,-1 L4.3,1 V4.6 L0,6.6 L-4.3,4.6 V1 Z M-4.3,1 L0,3 L4.3,1 M0,3 V6.6" fill="none" stroke="#555" stroke-width="0.75"/></g><rect x="214.3" y="40" width="0.6" height="15" fill="#c4c4c4"/><rect x="693.2" y="325.3" width="17.2" height="17.7" fill="#c9c9c9"/><rect x="737.3" y="325.3" width="17.7" height="17.7" fill="#c9c9c9"/><rect x="757.7" y="325.3" width="18.3" height="17.7" fill="#c9c9c9"/><rect x="481.6" y="327" width="0.6" height="14" fill="#c4c4c4"/><rect x="565.0" y="327" width="0.6" height="14" fill="#c4c4c4"/><rect x="689.8" y="327" width="0.6" height="14" fill="#c4c4c4"/><rect x="734.8" y="327" width="0.6" height="14" fill="#c4c4c4"/><g transform="translate(449.70,333.50) scale(1.000)"><g transform="translate(0,-1.4) scale(0.95)"><path d="M0,-5.2 L4.5,-2.6 L4.5,2.6 L0,5.2 L-4.5,2.6 L-4.5,-2.6 Z M-4.5,-2.6 L0,0 L4.5,-2.6 M0,0 L0,5.2" fill="none" stroke="#555" stroke-width="0.7" stroke-dasharray="1,0.5" stroke-linejoin="round"/></g><path d="M-3.2,2.3 L-0.9,4.2 L-3.2,6.1 M-0.4,2.3 L1.9,4.2 L-0.4,6.1" fill="none" stroke="#111" stroke-width="1.4"/></g><g transform="translate(469.00,333.50) scale(1.000)"><g transform="translate(0,-1) scale(1)"><path d="M0,-5.2 L4.5,-2.6 L4.5,2.6 L0,5.2 L-4.5,2.6 L-4.5,-2.6 Z M-4.5,-2.6 L0,0 L4.5,-2.6 M0,0 L0,5.2" fill="none" stroke="#444" stroke-width="0.8" stroke-linejoin="round"/></g><path d="M0,0.5 V4 M-1.5,2.6 L0,4.2 L1.5,2.6" fill="none" stroke="#333" stroke-width="0.8"/><rect x="-2" y="5.3" width="4" height="0.7" fill="#444"/></g><g transform="translate(492.70,333.50) scale(1.000)"><circle cx="-0.5" cy="-0.5" r="2.6" fill="none" stroke="#222" stroke-width="1.2"/><path d="M1.3,1.3 L3.8,3.8" stroke="#222" stroke-width="1.5"/><path d="M-4.6,-2.4 V-4.6 H-2.4 M2.4,-4.6 H4.6 V-2.4 M-4.6,2.4 V4.6 H-2.4" fill="none" stroke="#333" stroke-width="0.9"/></g><g transform="translate(513.00,333.50) scale(1.000)"><circle cx="-0.9" cy="-1" r="2.9" fill="none" stroke="#222" stroke-width="1.2"/><path d="M1.1,1.1 L4,4" stroke="#222" stroke-width="1.6"/><rect x="-2.3" y="-1.4" width="2.8" height="0.8" fill="#333"/><rect x="-1.3" y="-2.4" width="0.8" height="2.8" fill="#333"/></g><g transform="translate(533.10,333.50) scale(1.000)"><circle cx="-0.9" cy="-1" r="2.9" fill="none" stroke="#222" stroke-width="1.2"/><path d="M1.1,1.1 L4,4" stroke="#222" stroke-width="1.6"/><rect x="-2.3" y="-1.4" width="2.8" height="0.8" fill="#333"/></g><g transform="translate(553.40,333.50) scale(1.000)"><path d="M-2.8,-2.9 A4,4 0 1 0 1.8,-3.8" fill="none" stroke="#1c1c1c" stroke-width="1.3"/><path d="M-4.6,-4.4 L-0.9,-4.5 L-2.8,-1.4 Z" fill="#1c1c1c"/></g><g transform="translate(578.00,333.50) scale(1.250)"><path d="M0,-3.6 L3.2,-1.8 V1.8 L0,3.6 L-3.2,1.8 V-1.8 Z M-3.2,-1.8 L0,0 L3.2,-1.8 M0,0 V3.6" fill="none" stroke="#333" stroke-width="0.75"/><path d="M3.6,-1.2 L5.4,0 L3.6,1.2 Z" fill="#111"/></g><g transform="translate(597.80,333.50) scale(1.250)"><path d="M0,-3.6 L3.2,-1.8 V1.8 L0,3.6 L-3.2,1.8 V-1.8 Z M-3.2,-1.8 L0,0 L3.2,-1.8 M0,0 V3.6" fill="none" stroke="#333" stroke-width="0.75"/><path d="M-1.2,-3.8 L0,-5.4 L1.2,-3.8 Z" fill="#111"/></g><g transform="translate(617.20,333.50) scale(1.250)"><path d="M0,-3.6 L3.2,-1.8 V1.8 L0,3.6 L-3.2,1.8 V-1.8 Z M-3.2,-1.8 L0,0 L3.2,-1.8 M0,0 V3.6" fill="none" stroke="#333" stroke-width="0.75"/><path d="M-1.2,3.8 L0,5.4 L1.2,3.8 Z" fill="#111"/></g><g transform="translate(638.00,333.50) scale(1.250)"><path d="M0,-3.6 L3.2,-1.8 V1.8 L0,3.6 L-3.2,1.8 V-1.8 Z M-3.2,-1.8 L0,0 L3.2,-1.8 M0,0 V3.6" fill="none" stroke="#333" stroke-width="0.75"/><path d="M-3.6,-1.2 L-5.4,0 L-3.6,1.2 Z" fill="#111"/></g><g transform="translate(657.60,333.50) scale(1.250)"><path d="M0,-3.6 L3.2,-1.8 V1.8 L0,3.6 L-3.2,1.8 V-1.8 Z" fill="#333"/><path d="M0,0 L3.2,-1.8 V1.8 L0,3.6 Z" fill="#bbb" stroke="#333" stroke-width="0.6"/></g><g transform="translate(677.70,333.50) scale(1.250)"><path d="M0,-3.6 L3.2,-1.8 V1.8 L0,3.6 L-3.2,1.8 V-1.8 Z" fill="#ccc" stroke="#333" stroke-width="0.7"/><path d="M0,-3.6 L3.2,-1.8 V1.8 L0,0 Z" fill="#222"/><path d="M-3.2,-1.8 L0,0 V3.6" fill="none" stroke="#333" stroke-width="0.6"/></g><g transform="translate(702.00,333.50) scale(1.000)"><path d="M-3.8,-0.6 L1.2,-2.8 L5,-4.6 L2.6,2 L-0.6,4 L-4,3.4 Z" fill="#c8c8c8" stroke="#222" stroke-width="0.8"/><path d="M-3.8,-0.6 L-0.6,0.4 L5,-4.6 M-0.6,0.4 V4" fill="none" stroke="#222" stroke-width="0.7"/></g><g transform="translate(722.70,333.50) scale(1.000)"><rect x="-3.6" y="-1.4" width="4.8" height="4.8" fill="none" stroke="#222" stroke-width="0.8"/><rect x="-1.2" y="-4" width="4.8" height="4.8" fill="none" stroke="#222" stroke-width="0.8"/><path d="M-3.6,-1.4 L-1.2,-4 M1.2,-1.4 L3.6,-4 M1.2,3.4 L3.6,0.8 M-3.6,3.4 L-1.2,0.8" stroke="#222" stroke-width="0.6"/></g><g transform="translate(746.50,333.50) scale(1.000)"><path d="M-0.5,-5 V0.6 L-4,3.8 M-0.5,0.6 H4.5" fill="none" stroke="#333" stroke-width="0.8"/></g><g transform="translate(767.60,333.50) scale(1.000)"><path d="M-1.2,-5 V0.2 L-4.4,4 M-1.2,0.2 L3.6,-0.6" fill="none" stroke="#444" stroke-width="0.7"/><path d="M-2,-4.2 H-0.4 M-2,-2.6 H-0.4" stroke="#444" stroke-width="0.5"/><text x="1.8" y="4.6" font-family="Liberation Serif" font-size="5.4" text-anchor="middle" fill="#333" style="-webkit-font-smoothing:antialiased">10</text></g><g transform="translate(786.50,333.50) scale(1.000)"><rect x="-3.8" y="-3.2" width="7.6" height="6.4" fill="none" stroke="#333" stroke-width="0.8"/><rect x="-4.3" y="-3.7" width="1" height="1" fill="#222"/><rect x="3.3" y="-3.7" width="1" height="1" fill="#222"/><rect x="-4.3" y="2.7" width="1" height="1" fill="#222"/><rect x="3.3" y="2.7" width="1" height="1" fill="#222"/></g></svg><svg class="a" style="left:0;top:0" width="1024" height="502" viewBox="0 0 1024 502"><path d="M37.20,192.90 V204.03 H39.60" fill="none" stroke="#737373" stroke-width="0.85"/><path d="M37.20,218.96 V230.09 H39.60" fill="none" stroke="#737373" stroke-width="0.85"/><path d="M37.20,245.02 V256.15 H39.60" fill="none" stroke="#737373" stroke-width="0.85"/><path d="M37.20,277.59 V373.42 H39.60" fill="none" stroke="#737373" stroke-width="0.85"/><path d="M37.20,341.05 H39.40" stroke="#737373" stroke-width="0.8"/><path d="M37.20,367.11 H39.40" stroke="#737373" stroke-width="0.8"/><rect x="34.8" y="188.50" width="4.9" height="5.2" fill="#fafafa" stroke="#6a6a6a" stroke-width="0.7"/><path d="M35.8,191.10 H38.7" stroke="#444" stroke-width="0.7"/><rect x="34.8" y="214.56" width="4.9" height="5.2" fill="#fafafa" stroke="#6a6a6a" stroke-width="0.7"/><path d="M35.8,217.16 H38.7" stroke="#444" stroke-width="0.7"/><rect x="34.8" y="240.62" width="4.9" height="5.2" fill="#fafafa" stroke="#6a6a6a" stroke-width="0.7"/><path d="M35.8,243.22 H38.7" stroke="#444" stroke-width="0.7"/><rect x="34.8" y="273.19" width="4.9" height="5.2" fill="#fafafa" stroke="#6a6a6a" stroke-width="0.7"/><path d="M35.8,275.79 H38.7" stroke="#444" stroke-width="0.7"/><rect x="34.8" y="318.80" width="4.9" height="5.2" fill="#fafafa" stroke="#6a6a6a" stroke-width="0.7"/><path d="M35.8,321.40 H38.7" stroke="#444" stroke-width="0.7"/><rect x="34.8" y="344.86" width="4.9" height="5.2" fill="#fafafa" stroke="#6a6a6a" stroke-width="0.7"/><path d="M35.8,347.46 H38.7" stroke="#444" stroke-width="0.7"/></svg>
</body></html>
